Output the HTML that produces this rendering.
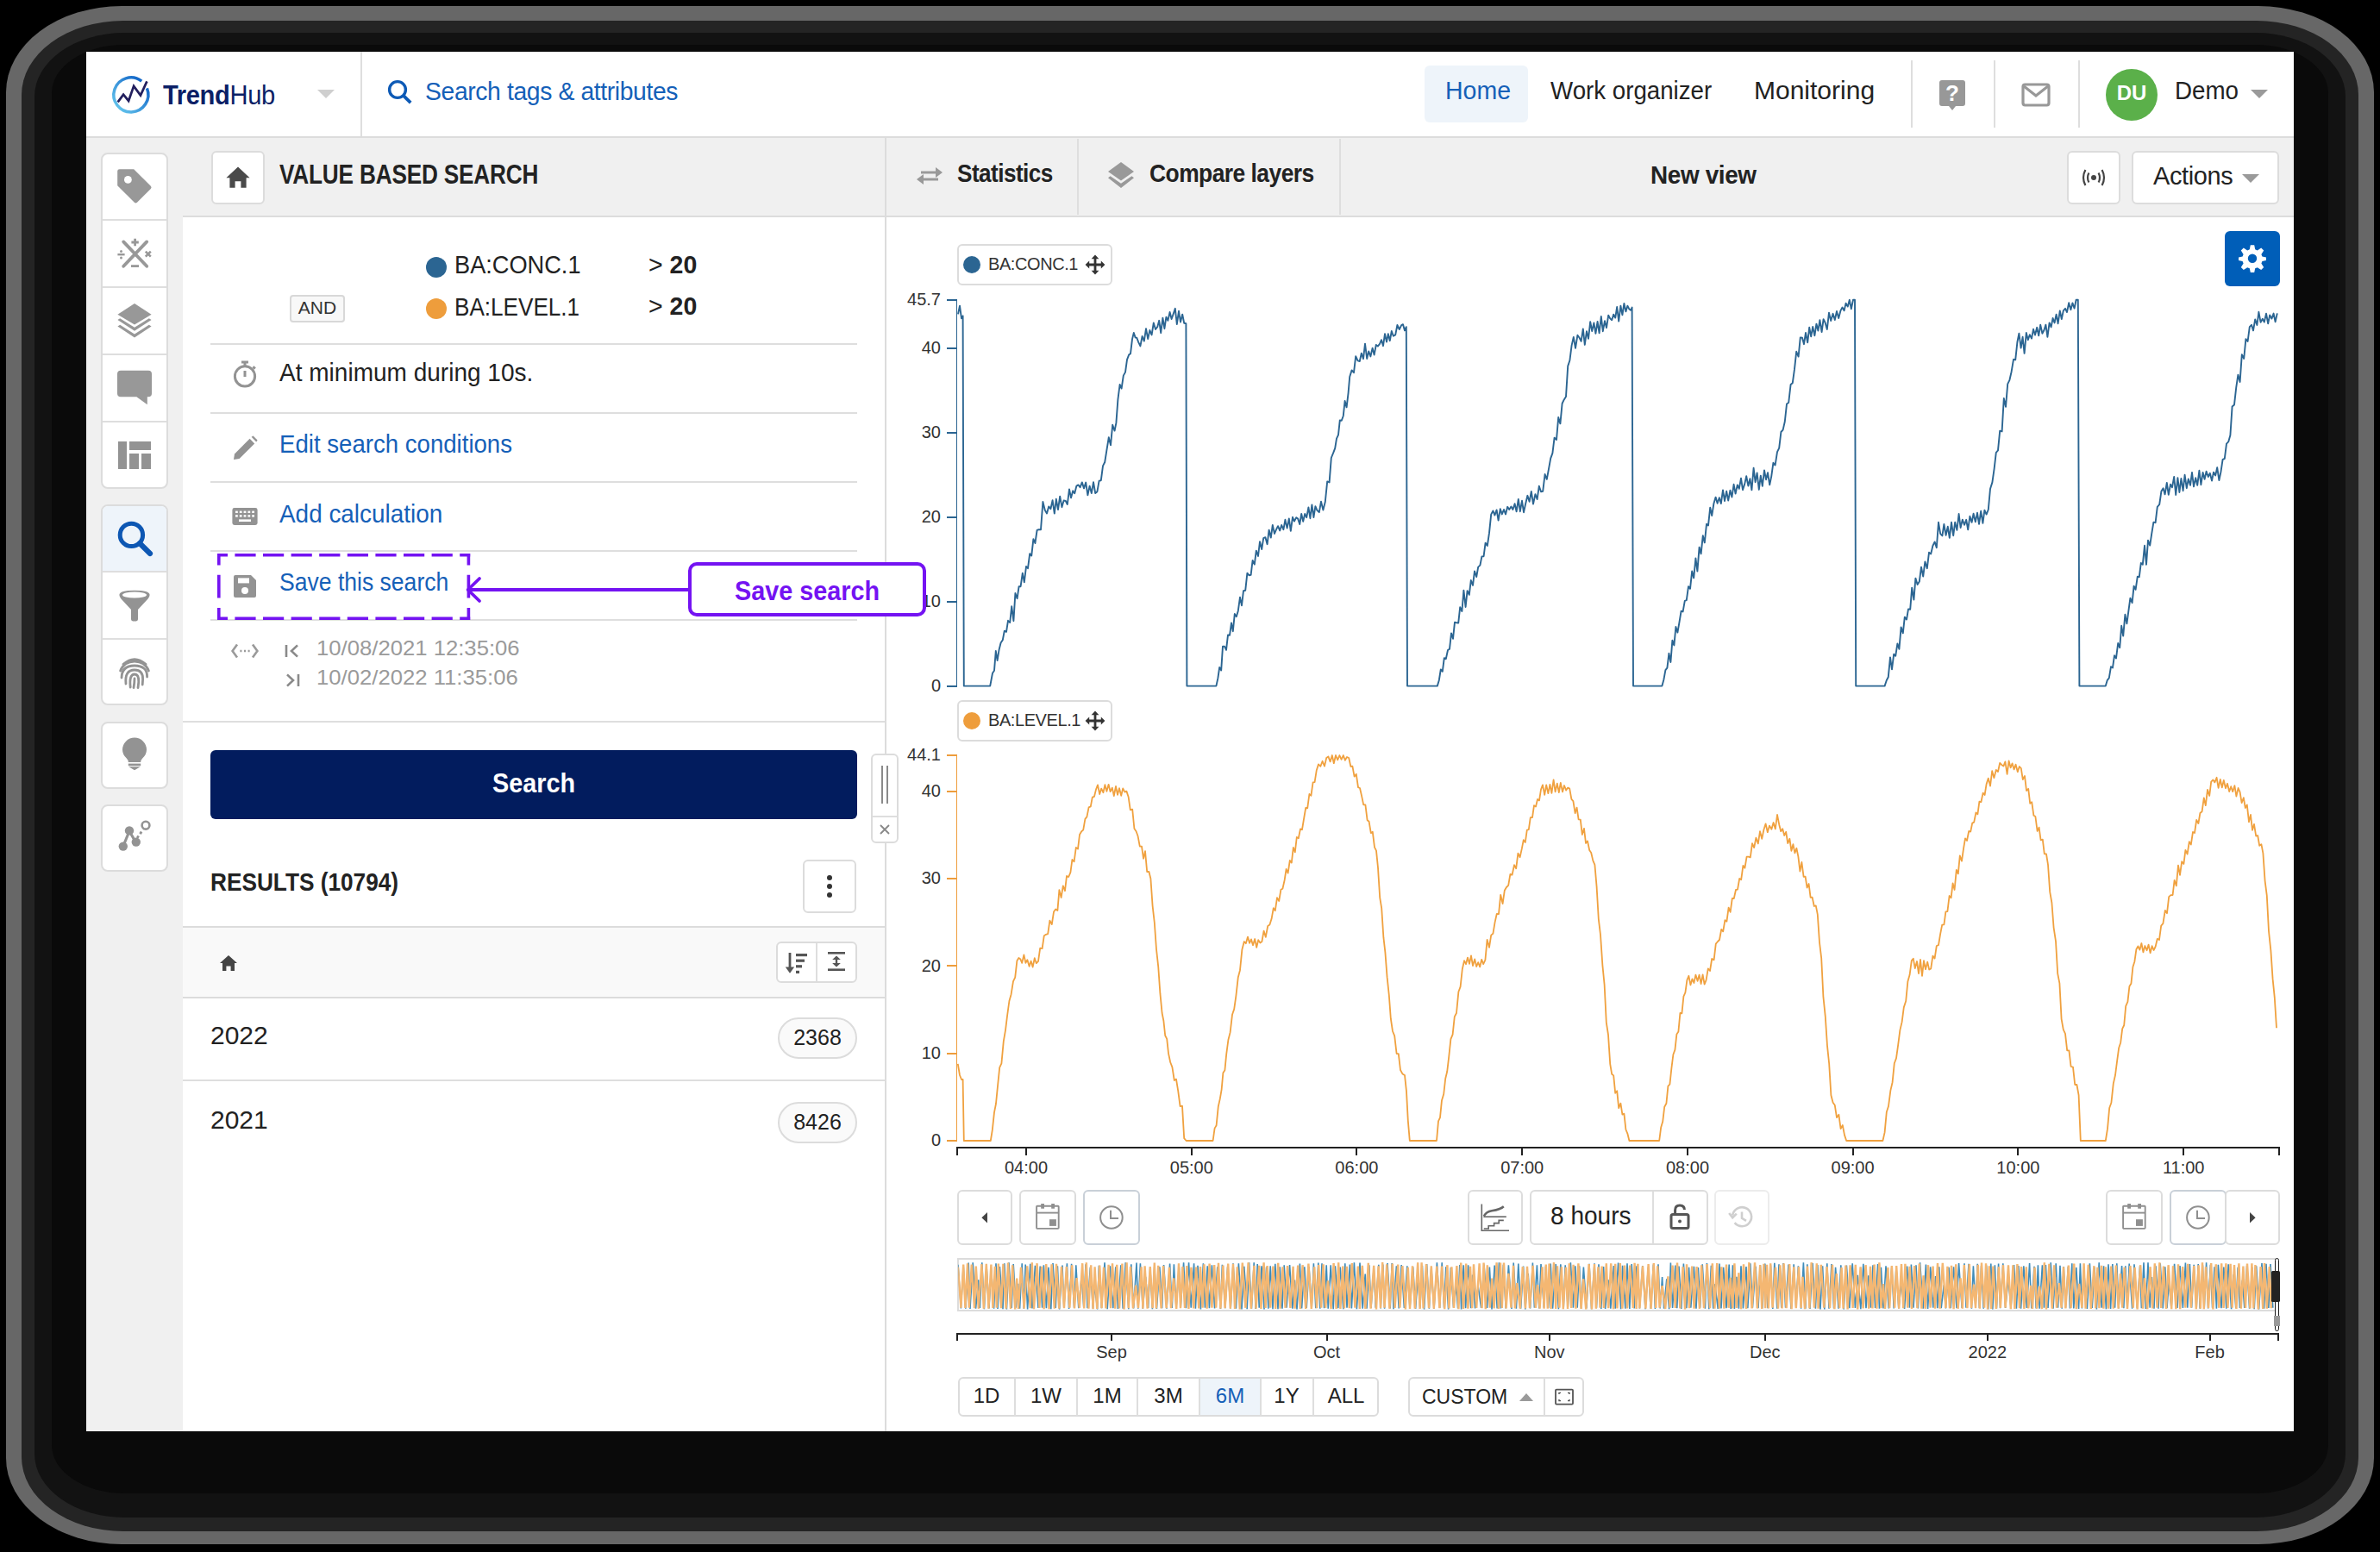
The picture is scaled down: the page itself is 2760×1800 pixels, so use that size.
<!DOCTYPE html>
<html><head><meta charset="utf-8">
<style>
*{box-sizing:border-box;margin:0;padding:0}
html,body{width:2760px;height:1800px;overflow:hidden;background:#000}
body{font-family:"Liberation Sans",sans-serif;color:#222;position:relative}
.sh{position:absolute}
#win{position:absolute;left:50px;top:30px;width:1280px;height:800px;zoom:2;background:#f0f0f0;overflow:hidden}
.a{position:absolute}
.t{position:absolute;white-space:nowrap;line-height:1}
svg{position:absolute;overflow:visible}
.btn{position:absolute;background:#fff;border:1px solid #dcdcdc;border-radius:3px}
.sep{position:absolute;background:#dedede}
</style></head><body>
<!-- shadow -->
<div class="sh" style="left:7px;top:7px;width:2746px;height:1784px;border-radius:134px/100px;background:#676767"></div>
<div class="sh" style="left:25px;top:24px;width:2710px;height:1752px;border-radius:118px/86px;background:#242424"></div>
<div class="sh" style="left:40px;top:38px;width:2680px;height:1722px;border-radius:104px/74px;background:#121212"></div>
<div class="sh" style="left:60px;top:52px;width:2640px;height:1680px;border-radius:84px/56px;background:#0a0a0a"></div>
<div id="win">
<!-- HEADER -->
<div class="a" style="left:0;top:0;width:1280px;height:49px;background:#fff;border-bottom:1px solid #dcdcdc;height:50px"></div>
<div class="sep" style="left:159px;top:0;width:1px;height:49px"></div>

<!-- logo -->
<svg style="left:14px;top:13px" width="24" height="24" viewBox="0 0 24 24">
 <defs><linearGradient id="lg" x1="0.1" y1="0.9" x2="0.9" y2="0.1"><stop offset="0" stop-color="#62c3ec"/><stop offset="1" stop-color="#0f62c6"/></linearGradient></defs>
 <path d="M21.21 8.22 A10 10 0 1 1 18.10 4.09" fill="none" stroke="url(#lg)" stroke-width="1.75"/>
 <path d="M4.32 16.18 L7.55 11.79 L10.56 15.48 L13.56 6.94 L17.49 12.25 L21.19 4.16" fill="none" stroke="#221f5e" stroke-width="1.35" stroke-linejoin="miter" stroke-miterlimit="3"/>
</svg>
<div class="t" style="left:44.6px;top:16.8px;font-size:16px;color:#0b1f66;letter-spacing:-0.2px;transform:scaleX(0.91);transform-origin:0 0"><b>Trend</b>Hub</div>
<svg style="left:134px;top:22px" width="10" height="5" viewBox="0 0 10 5"><path d="M0 0H10L5 5Z" fill="#cfcfcf"/></svg>
<!-- search -->
<svg style="left:174.3px;top:16.2px" width="15" height="15" viewBox="0 0 15 15"><circle cx="6" cy="6" r="4.7" fill="none" stroke="#0d5ab6" stroke-width="1.7"/><path d="M9.4 9.4 L13.6 13.6" stroke="#0d5ab6" stroke-width="1.9" stroke-linecap="butt"/></svg>
<div class="t" style="left:196.5px;top:15.4px;font-size:14.8px;color:#1560b8;letter-spacing:-0.2px;transform:scaleX(0.957);transform-origin:0 0">Search tags &amp; attributes</div>
<!-- nav -->
<div class="a" style="left:776px;top:8px;width:60px;height:33px;background:#eef4fa;border-radius:3px"></div>
<div class="t" style="left:788px;top:15px;font-size:15px;color:#1560b8;transform:scaleX(0.95);transform-origin:0 0">Home</div>
<div class="t" style="left:849px;top:15px;font-size:15px;color:#222;transform:scaleX(0.923);transform-origin:0 0">Work organizer</div>
<div class="t" style="left:967px;top:15px;font-size:15px;color:#222">Monitoring</div>
<div class="sep" style="left:1058px;top:5px;width:1px;height:39px"></div>
<div class="sep" style="left:1106px;top:5px;width:1px;height:39px"></div>
<div class="sep" style="left:1155px;top:5px;width:1px;height:39px"></div>
<svg style="left:1074px;top:16px" width="16" height="19" viewBox="0 0 16 19"><path d="M2 0.5H14A1.5 1.5 0 0 1 15.5 2V14A1.5 1.5 0 0 1 14 15.5H10L8 18L6 15.5H2A1.5 1.5 0 0 1 0.5 14V2A1.5 1.5 0 0 1 2 0.5Z" fill="#989898"/><text x="8" y="12.6" font-family="Liberation Sans" font-weight="bold" font-size="13" fill="#fff" text-anchor="middle">?</text></svg>
<svg style="left:1122px;top:18px" width="17" height="14" viewBox="0 0 17 14"><rect x="1" y="1" width="15" height="12" rx="1.2" fill="none" stroke="#989898" stroke-width="1.6"/><path d="M1.5 2 L8.5 7.5 L15.5 2" fill="none" stroke="#989898" stroke-width="1.6"/></svg>
<div class="a" style="left:1171px;top:10px;width:30px;height:30px;border-radius:50%;background:#5bb04a"></div>
<div class="t" style="left:1171px;top:18px;width:30px;text-align:center;font-size:12px;font-weight:bold;color:#fff">DU</div>
<div class="t" style="left:1211px;top:15px;font-size:15px;color:#222;transform:scaleX(0.925);transform-origin:0 0">Demo</div>
<svg style="left:1255px;top:22px" width="10" height="5" viewBox="0 0 10 5"><path d="M0 0H10L5 5Z" fill="#9a9a9a"/></svg>


<!-- SIDEBAR -->
<div class="btn" style="left:8.5px;top:58.5px;width:39px;height:195px;border-radius:4px"></div>
<div class="sep" style="left:9.5px;top:97px;width:37px;height:1px"></div>
<div class="sep" style="left:9.5px;top:136px;width:37px;height:1px"></div>
<div class="sep" style="left:9.5px;top:175px;width:37px;height:1px"></div>
<div class="sep" style="left:9.5px;top:214px;width:37px;height:1px"></div>
<div class="btn" style="left:8.5px;top:262.5px;width:39px;height:116.5px;border-radius:4px"></div>
<div class="a" style="left:9.5px;top:263.5px;width:37px;height:38px;background:#eef4fa;border-radius:3px 3px 0 0"></div>
<div class="sep" style="left:9.5px;top:301px;width:37px;height:1px"></div>
<div class="sep" style="left:9.5px;top:340px;width:37px;height:1px"></div>
<div class="btn" style="left:8.5px;top:388.5px;width:39px;height:39px;border-radius:4px"></div>
<div class="btn" style="left:8.5px;top:436.5px;width:39px;height:39px;border-radius:4px"></div>
<!-- tag -->
<svg style="left:18px;top:68px" width="20" height="20" viewBox="0 0 20 20"><path d="M1.3 0.1 H9.6 L19.4 9.9 Q20.2 10.7 19.4 11.5 L11.5 19.4 Q10.7 20.2 9.9 19.4 L0.1 9.6 V1.3 Q0.1 0.1 1.3 0.1Z" fill="#989898"/><circle cx="6.2" cy="6.2" r="2.2" fill="#fff"/></svg>
<!-- calc -->
<svg style="left:18px;top:106px" width="21" height="21" viewBox="0 0 21 21" stroke="#989898" fill="none" stroke-linecap="round"><path d="M3.6 4.2 L17.1 18.4 M17.1 4.2 L3.6 18.4" stroke-width="1.9"/><path d="M10.3 2.4V6.6 M8.2 4.5H12.4" stroke-width="1.4" stroke-linecap="butt"/><path d="M8 18.3H12.5" stroke-width="1.4" stroke-linecap="butt"/><path d="M0.2 11.6H4.3" stroke-width="1.2" stroke-linecap="butt"/><circle cx="2.25" cy="9.7" r="0.75" fill="#989898" stroke="none"/><circle cx="2.25" cy="13.5" r="0.75" fill="#989898" stroke="none"/><path d="M16.4 9.8 L19.4 12.8 M19.4 9.8 L16.4 12.8" stroke-width="1.3" stroke-linecap="butt"/></svg>
<!-- layers -->
<svg style="left:18px;top:145px" width="20" height="22" viewBox="0 0 20 22" fill="#989898"><path d="M10 1 L19.8 7.4 L10 13.3 L0.2 7.4Z"/><path d="M1.6 9.6 L10 14.9 L18.4 9.6 L19.8 10.5 L10 16.9 L0.2 10.5Z"/><path d="M1.6 13.4 L10 18.7 L18.4 13.4 L19.8 14.3 L10 20.8 L0.2 14.3Z"/></svg>
<!-- chat -->
<svg style="left:18px;top:184px" width="20" height="21" viewBox="0 0 20 21" fill="#989898"><path d="M2 0.9H18Q20 0.9 20 2.9V14.1Q20 16.1 18 16.1H17.4V20.6L11.2 16.1H2Q0 16.1 0 14.1V2.9Q0 0.9 2 0.9Z"/></svg>
<!-- dashboard -->
<svg style="left:18px;top:224px" width="20" height="20" viewBox="0 0 20 20" fill="#939393"><rect x="0.5" y="2" width="5" height="16"/><rect x="7" y="2" width="12.5" height="5"/><rect x="7" y="9" width="5.5" height="9"/><rect x="14" y="9" width="5.5" height="9"/></svg>
<!-- search active -->
<svg style="left:18px;top:272px" width="21" height="21" viewBox="0 0 21 21"><circle cx="8.2" cy="8.2" r="6.6" fill="none" stroke="#0d57b3" stroke-width="2.5"/><path d="M13.1 13.1 L19 19" stroke="#0d57b3" stroke-width="3.1" stroke-linecap="round"/></svg>
<!-- funnel -->
<svg style="left:18px;top:311px" width="20" height="20" viewBox="0 0 20 20" fill="#939393"><path d="M1.2 4 Q1.2 1.4 10 1.4 Q18.8 1.4 18.8 4 Q18.8 5 17.8 6.2 L12 12.5 V18 Q12 19.3 10 19.3 Q8 19.3 8 18 V12.5 L2.2 6.2 Q1.2 5 1.2 4Z"/><ellipse cx="10" cy="4" rx="7" ry="1.8" fill="#fff"/></svg>
<!-- fingerprint -->
<svg style="left:18px;top:350px" width="20" height="20" viewBox="0 0 20 20" fill="none" stroke="#939393" stroke-width="1.4" stroke-linecap="round"><path d="M3.5 5.2 Q10 -0.5 16.5 5.2"/><path d="M1.8 9 Q4 3.5 10 3.5 Q16 3.5 18.2 9"/><path d="M2.5 13 Q2.6 6 10 6 Q17.4 6 17.3 12.5"/><path d="M5 16.5 Q4.2 8.5 10 8.5 Q15 8.5 14.8 14 L14.6 17"/><path d="M7.6 18.5 Q6.8 11 10 11 Q12.6 11 12.4 15.5 L12 18.8"/><path d="M10 13.5 Q10 16 9.5 18.8"/></svg>
<!-- bulb -->
<svg style="left:18px;top:397px" width="20" height="20" viewBox="0 0 20 20" fill="#939393"><path d="M10 0.8 A7 7 0 0 1 17 7.8 Q17 10.6 14.6 12.8 Q13.6 13.8 13.6 15 H6.4 Q6.4 13.8 5.4 12.8 Q3 10.6 3 7.8 A7 7 0 0 1 10 0.8Z"/><rect x="6.4" y="15.8" width="7.2" height="1.3"/><path d="M6.6 17.6H13.4L10 19.6Z"/></svg>
<!-- scatter -->
<svg style="left:18px;top:445px" width="20" height="20" viewBox="0 0 20 20" fill="#939393"><path d="M3.5 15.5 L7 7 L10.5 13" stroke="#939393" stroke-width="1.6" fill="none"/><path d="M11.5 11 L15 6" stroke="#939393" stroke-width="1.4" stroke-dasharray="1.5 1.5" fill="none"/><circle cx="3.4" cy="15.8" r="2.6"/><circle cx="7" cy="6.7" r="2.6"/><circle cx="10.9" cy="13.3" r="2.6"/><circle cx="16.5" cy="3.6" r="2.2" fill="#fff" stroke="#939393" stroke-width="1.3"/></svg>

<!-- LEFT PANEL -->
<div class="a" style="left:56px;top:95px;width:408px;height:705px;background:#fff;border-top:1px solid #dcdcdc"></div>
<div class="btn" style="left:72.5px;top:57.5px;width:31px;height:31px;border-radius:3px"></div>
<svg style="left:80.5px;top:65.5px" width="15" height="15" viewBox="0 0 15 15"><path d="M7.5 1.2 L14.3 7.6 H12.3 V13.4 H9.2 V9.6 H5.8 V13.4 H2.7 V7.6 H0.7Z" fill="#4a4a4a"/></svg>
<div class="t" style="left:112px;top:63px;font-size:16px;font-weight:bold;color:#222;letter-spacing:-0.1px;transform:scaleX(0.817);transform-origin:0 0">VALUE BASED SEARCH</div>

<!-- conditions -->
<div class="a" style="left:197px;top:119px;width:12px;height:12px;border-radius:50%;background:#2b6592"></div>
<div class="t" style="left:213.5px;top:116px;font-size:15px;color:#222;transform:scaleX(0.906);transform-origin:0 0">BA:CONC.1</div>
<div class="t" style="left:326px;top:116px;font-size:15px;color:#222;font-weight:bold;transform:scaleX(0.95);transform-origin:0 0"><span style="font-weight:normal">&gt;</span> 20</div>
<div class="a" style="left:118px;top:141px;width:32px;height:16px;border:1px solid #d8d8d8;border-radius:2px;background:#f8f8f8"></div>
<div class="t" style="left:118px;top:143px;width:32px;text-align:center;font-size:10.5px;color:#333">AND</div>
<div class="a" style="left:197px;top:143px;width:12px;height:12px;border-radius:50%;background:#ee9d3c"></div>
<div class="t" style="left:213.5px;top:140.5px;font-size:15px;color:#222;transform:scaleX(0.87);transform-origin:0 0">BA:LEVEL.1</div>
<div class="t" style="left:326px;top:140px;font-size:15px;color:#222;font-weight:bold;transform:scaleX(0.95);transform-origin:0 0"><span style="font-weight:normal">&gt;</span> 20</div>

<div class="sep" style="left:72px;top:169px;width:375px;height:1px"></div>
<div class="sep" style="left:72px;top:209px;width:375px;height:1px"></div>
<div class="sep" style="left:72px;top:249px;width:375px;height:1px"></div>
<div class="sep" style="left:72px;top:289px;width:375px;height:1px"></div>
<div class="sep" style="left:72px;top:329px;width:375px;height:1px"></div>

<!-- stopwatch -->
<svg style="left:84.5px;top:179px" width="15" height="16" viewBox="0 0 15 16" fill="none" stroke="#939393" stroke-width="1.5"><circle cx="7.5" cy="9.2" r="5.8"/><path d="M5.5 1H9.5 M7.5 1V3.4 M7.5 6V9.5"/><path d="M12.2 3.6L13.4 4.8"/></svg>
<div class="t" style="left:112px;top:178.5px;font-size:15px;color:#222;transform:scaleX(0.934);transform-origin:0 0">At minimum during 10s.</div>
<!-- pencil -->
<svg style="left:85px;top:222.8px" width="14" height="14" viewBox="0 0 14 14" fill="#939393"><path d="M0.5 13.5 L1 10.2 L9.8 1.4 L12.6 4.2 L3.8 13Z"/><path d="M10.8 0.4 L11.8 -0.2 L14.3 2.3 L13.6 3.3Z"/></svg>
<div class="t" style="left:112px;top:220px;font-size:15px;color:#1560b8;transform:scaleX(0.92);transform-origin:0 0">Edit search conditions</div>
<!-- keyboard -->
<svg style="left:84.5px;top:264px" width="15" height="11" viewBox="0 0 15 11"><rect x="0.2" y="0.5" width="14.6" height="10" rx="1.2" fill="#939393"/><g fill="#fff"><rect x="2" y="2.3" width="1.4" height="1.2"/><rect x="4.4" y="2.3" width="1.4" height="1.2"/><rect x="6.8" y="2.3" width="1.4" height="1.2"/><rect x="9.2" y="2.3" width="1.4" height="1.2"/><rect x="11.6" y="2.3" width="1.4" height="1.2"/><rect x="2" y="4.6" width="1.4" height="1.2"/><rect x="4.4" y="4.6" width="1.4" height="1.2"/><rect x="6.8" y="4.6" width="1.4" height="1.2"/><rect x="9.2" y="4.6" width="1.4" height="1.2"/><rect x="11.6" y="4.6" width="1.4" height="1.2"/><rect x="4" y="7.2" width="7" height="1.3"/></g></svg>
<div class="t" style="left:112px;top:260.5px;font-size:15px;color:#1560b8;transform:scaleX(0.93);transform-origin:0 0">Add calculation</div>
<!-- floppy -->
<svg style="left:85px;top:303px" width="14" height="14" viewBox="0 0 14 14" fill="#939393"><path d="M1.5 0.5H10.5L13.5 3.5V12.5Q13.5 13.5 12.5 13.5H1.5Q0.5 13.5 0.5 12.5V1.5Q0.5 0.5 1.5 0.5Z"/><rect x="3" y="2.2" width="6.5" height="3" fill="#fff"/><circle cx="7" cy="9.5" r="2" fill="#fff"/></svg>
<div class="t" style="left:112px;top:300.2px;font-size:15px;color:#1560b8;transform:scaleX(0.885);transform-origin:0 0">Save this search</div>

<!-- dates -->
<svg style="left:84px;top:343px" width="16" height="9" viewBox="0 0 16 9" fill="none" stroke="#9a9a9a" stroke-width="1.3"><path d="M3.5 0.8 L0.8 4.5 L3.5 8.2 M12.5 0.8 L15.2 4.5 L12.5 8.2"/><path d="M5.2 4.5H6.2 M7.5 4.5H8.5 M9.8 4.5H10.8"/></svg>
<svg style="left:115px;top:343px" width="9" height="9" viewBox="0 0 9 9" fill="none" stroke="#8a8a8a" stroke-width="1.3"><path d="M1 1V8 M7.5 1.2 L4 4.5 L7.5 7.8"/></svg>
<svg style="left:115px;top:360px" width="9" height="9" viewBox="0 0 9 9" fill="none" stroke="#8a8a8a" stroke-width="1.3"><path d="M8 1V8 M1.5 1.2 L5 4.5 L1.5 7.8"/></svg>
<div class="t" style="left:133.5px;top:340px;font-size:12px;color:#9a9a9a;transform:scaleX(1.07);transform-origin:0 0">10/08/2021 12:35:06</div>
<div class="t" style="left:133.5px;top:357px;font-size:12px;color:#9a9a9a;transform:scaleX(1.07);transform-origin:0 0">10/02/2022 11:35:06</div>
<div class="sep" style="left:56px;top:388px;width:408px;height:1px"></div>

<!-- search button -->
<div class="a" style="left:72px;top:405px;width:375px;height:40px;background:#021c5e;border-radius:3px"></div>
<div class="t" style="left:72px;top:416px;width:375px;text-align:center;font-size:16px;font-weight:bold;color:#fff;transform:scaleX(0.9);transform-origin:50% 0">Search</div>

<!-- results -->
<div class="t" style="left:72px;top:474.1px;font-size:15px;font-weight:bold;color:#222;transform:scaleX(0.874);transform-origin:0 0">RESULTS (10794)</div>
<div class="btn" style="left:415.5px;top:468.5px;width:31px;height:31px;border-radius:3px"></div>
<svg style="left:429px;top:477px" width="4" height="14" viewBox="0 0 4 14" fill="#333"><circle cx="2" cy="2" r="1.5"/><circle cx="2" cy="7" r="1.5"/><circle cx="2" cy="12" r="1.5"/></svg>
<div class="a" style="left:56px;top:507px;width:408px;height:42px;background:#f9f9f9;border-top:1px solid #dcdcdc;border-bottom:1px solid #dcdcdc"></div>
<svg style="left:77px;top:523.5px" width="11" height="10" viewBox="0 0 11 10"><path d="M5.5 0.5 L10.5 5 H9 V9.5 H6.8 V6.8 H4.2 V9.5 H2 V5 H0.5Z" fill="#444"/></svg>
<div class="btn" style="left:400px;top:516px;width:47px;height:24px;border-radius:3px"></div>
<div class="sep" style="left:423px;top:517px;width:1px;height:22px"></div>
<svg style="left:405px;top:522px" width="14" height="13" viewBox="0 0 14 13" fill="#555"><path d="M3 0.5V10" stroke="#555" stroke-width="1.4"/><path d="M0.4 8.8 L3 12.4 L5.6 8.8Z"/><rect x="6.5" y="1" width="6.5" height="1.6"/><rect x="6.5" y="4.3" width="5" height="1.6"/><rect x="6.5" y="7.6" width="3.5" height="1.6"/><rect x="6.5" y="10.9" width="2" height="1.6"/></svg>
<svg style="left:429px;top:521.5px" width="12" height="12" viewBox="0 0 12 12" fill="#555"><rect x="1" y="0.5" width="10" height="1.3"/><rect x="1" y="10.2" width="10" height="1.3"/><path d="M6 2.8 L8.4 5 H3.6Z"/><path d="M6 9.2 L8.4 7 H3.6Z"/><rect x="5.4" y="4.6" width="1.2" height="2.8"/></svg>
<div class="t" style="left:72px;top:563px;font-size:15px;color:#222">2022</div>
<div class="a" style="left:401px;top:560px;width:46px;height:24px;border:1px solid #dcdcdc;border-radius:12px;background:#fafafa"></div>
<div class="t" style="left:401px;top:565.5px;width:46px;text-align:center;font-size:12.5px;color:#222">2368</div>
<div class="sep" style="left:56px;top:596px;width:408px;height:1px"></div>
<div class="t" style="left:72px;top:612.2px;font-size:15px;color:#222">2021</div>
<div class="a" style="left:401px;top:609px;width:46px;height:24px;border:1px solid #dcdcdc;border-radius:12px;background:#fafafa"></div>
<div class="t" style="left:401px;top:614.7px;width:46px;text-align:center;font-size:12.5px;color:#222">8426</div>

<!-- splitter vertical line -->
<div class="sep" style="left:463px;top:50px;width:1px;height:750px;background:#dcdcdc"></div>


<!-- CHART TOOLBAR -->
<svg style="left:481px;top:65.8px" width="16" height="12" viewBox="0 0 16 12" fill="#999"><path d="M3 3.2 H11.5 V1 L15.5 4 L11.5 7 V4.8 H3Z" /><path d="M13 7.2 H4.5 V5 L0.5 8 L4.5 11 V8.8 H13Z"/></svg>
<div class="t" style="left:505px;top:62.8px;font-size:15px;font-weight:bold;color:#222;letter-spacing:-0.3px;transform:scaleX(0.87);transform-origin:0 0">Statistics</div>
<div class="sep" style="left:574.5px;top:50.5px;width:1px;height:44px"></div>
<svg style="left:592px;top:63.5px" width="16" height="16" viewBox="0 0 16 16" fill="#999"><path d="M8 0.5 L15.5 6 L8 11.2 L0.5 6Z"/><path d="M1.8 8.6 L8 12.9 L14.2 8.6 L15.5 9.6 L8 15.5 L0.5 9.6Z"/></svg>
<div class="t" style="left:616.5px;top:62.8px;font-size:15px;font-weight:bold;color:#222;letter-spacing:-0.3px;transform:scaleX(0.88);transform-origin:0 0">Compare layers</div>
<div class="sep" style="left:726.5px;top:50.5px;width:1px;height:44px"></div>
<div class="t" style="left:907px;top:64px;font-size:15px;font-weight:bold;color:#222;letter-spacing:-0.2px;transform:scaleX(0.93);transform-origin:0 0">New view</div>
<div class="btn" style="left:1148.5px;top:57.5px;width:31px;height:31px;border-radius:3px"></div>
<svg style="left:1156px;top:67px" width="16" height="12" viewBox="0 0 16 12" fill="none" stroke="#444" stroke-width="1.1"><path d="M3.2 1.5 Q0.8 6 3.2 10.5 M12.8 1.5 Q15.2 6 12.8 10.5 M5.2 3.2 Q3.8 6 5.2 8.8 M10.8 3.2 Q12.2 6 10.8 8.8"/><circle cx="8" cy="6" r="1.5" fill="#444" stroke="none"/></svg>
<div class="btn" style="left:1186px;top:57.5px;width:85.5px;height:31px;border-radius:3px"></div>
<div class="t" style="left:1198.5px;top:64.5px;font-size:15px;color:#222;letter-spacing:-0.2px;transform:scaleX(0.965);transform-origin:0 0">Actions</div>
<svg style="left:1250px;top:71px" width="10" height="5" viewBox="0 0 10 5"><path d="M0 0H10L5 5Z" fill="#9a9a9a"/></svg>

<!-- CHART AREA -->
<div class="a" style="left:464px;top:95px;width:816px;height:705px;background:#fff;border-top:1px solid #dcdcdc"></div>
<div class="a" style="left:1240px;top:104px;width:32px;height:32px;background:#005eb8;border-radius:3px"></div>
<svg style="left:1248px;top:112px" width="16" height="16" viewBox="0 0 16 16"><path fill="#fff" fill-rule="evenodd" d="M6.9 0.1H9.1L9.6 2.6L10.9 3.2L13.1 1.8L14.6 3.3L13.2 5.5L13.7 6.8L16 7.3V9.0L13.7 9.5L13.2 10.8L14.6 13L13.1 14.5L10.9 13.1L9.6 13.6L9.1 16H6.9L6.4 13.6L5.1 13.1L2.9 14.5L1.4 13L2.8 10.8L2.3 9.5L0 9.0V7.3L2.3 6.8L2.8 5.5L1.4 3.3L2.9 1.8L5.1 3.2L6.4 2.6Z M8 5.3A2.6 2.6 0 1 0 8 10.5A2.6 2.6 0 1 0 8 5.3Z"/></svg>

<!-- legend 1 -->
<div class="btn" style="left:505px;top:111.5px;width:90px;height:24px;border-radius:3px"></div>
<div class="a" style="left:508.5px;top:118.5px;width:10px;height:10px;border-radius:50%;background:#2b6592"></div>
<div class="t" style="left:523px;top:118.5px;font-size:9.8px;color:#333;letter-spacing:-0.2px;transform:scaleX(1.02);transform-origin:0 0">BA:CONC.1</div>
<svg style="left:579px;top:117.5px" width="12" height="12" viewBox="0 0 12 12" fill="#333"><path d="M6 0.3 L8.2 2.6 H6.7 V5.3 H9.4 V3.8 L11.7 6 L9.4 8.2 V6.7 H6.7 V9.4 H8.2 L6 11.7 L3.8 9.4 H5.3 V6.7 H2.6 V8.2 L0.3 6 L2.6 3.8 V5.3 H5.3 V2.6 H3.8Z"/></svg>
<!-- legend 2 -->
<div class="btn" style="left:505px;top:376px;width:90px;height:24px;border-radius:3px"></div>
<div class="a" style="left:508.5px;top:383px;width:10px;height:10px;border-radius:50%;background:#ee9d3c"></div>
<div class="t" style="left:523px;top:383px;font-size:9.8px;color:#333;letter-spacing:-0.2px;transform:scaleX(1.02);transform-origin:0 0">BA:LEVEL.1</div>
<svg style="left:579px;top:382px" width="12" height="12" viewBox="0 0 12 12" fill="#333"><path d="M6 0.3 L8.2 2.6 H6.7 V5.3 H9.4 V3.8 L11.7 6 L9.4 8.2 V6.7 H6.7 V9.4 H8.2 L6 11.7 L3.8 9.4 H5.3 V6.7 H2.6 V8.2 L0.3 6 L2.6 3.8 V5.3 H5.3 V2.6 H3.8Z"/></svg>

<!-- axes -->
<div class="a" style="left:504.3px;top:143.5px;width:0.9px;height:224.5px;background:#2b6592"></div>
<div class="a" style="left:504.3px;top:407.5px;width:0.9px;height:224px;background:#ee9d3c"></div>
<div class="t" style="left:455.5px;top:138.6px;width:40px;text-align:right;font-size:10px;color:#333">45.7</div>
<div class="a" style="left:499px;top:143.4px;width:6px;height:1px;background:#2b6592"></div>
<div class="t" style="left:455.5px;top:166.5px;width:40px;text-align:right;font-size:10px;color:#333">40</div>
<div class="a" style="left:499px;top:171.3px;width:6px;height:1px;background:#2b6592"></div>
<div class="t" style="left:455.5px;top:215.5px;width:40px;text-align:right;font-size:10px;color:#333">30</div>
<div class="a" style="left:499px;top:220.3px;width:6px;height:1px;background:#2b6592"></div>
<div class="t" style="left:455.5px;top:264.5px;width:40px;text-align:right;font-size:10px;color:#333">20</div>
<div class="a" style="left:499px;top:269.3px;width:6px;height:1px;background:#2b6592"></div>
<div class="t" style="left:455.5px;top:313.5px;width:40px;text-align:right;font-size:10px;color:#333">10</div>
<div class="a" style="left:499px;top:318.3px;width:6px;height:1px;background:#2b6592"></div>
<div class="t" style="left:455.5px;top:362.5px;width:40px;text-align:right;font-size:10px;color:#333">0</div>
<div class="a" style="left:499px;top:367.3px;width:6px;height:1px;background:#2b6592"></div>
<div class="t" style="left:455.5px;top:402.7px;width:40px;text-align:right;font-size:10px;color:#333">44.1</div>
<div class="a" style="left:499px;top:407.5px;width:6px;height:1px;background:#ee9d3c"></div>
<div class="t" style="left:455.5px;top:423.5px;width:40px;text-align:right;font-size:10px;color:#333">40</div>
<div class="a" style="left:499px;top:428.3px;width:6px;height:1px;background:#ee9d3c"></div>
<div class="t" style="left:455.5px;top:474.2px;width:40px;text-align:right;font-size:10px;color:#333">30</div>
<div class="a" style="left:499px;top:479.0px;width:6px;height:1px;background:#ee9d3c"></div>
<div class="t" style="left:455.5px;top:524.8px;width:40px;text-align:right;font-size:10px;color:#333">20</div>
<div class="a" style="left:499px;top:529.6px;width:6px;height:1px;background:#ee9d3c"></div>
<div class="t" style="left:455.5px;top:575.5px;width:40px;text-align:right;font-size:10px;color:#333">10</div>
<div class="a" style="left:499px;top:580.3px;width:6px;height:1px;background:#ee9d3c"></div>
<div class="t" style="left:455.5px;top:626.2px;width:40px;text-align:right;font-size:10px;color:#333">0</div>
<div class="a" style="left:499px;top:631.0px;width:6px;height:1px;background:#ee9d3c"></div>

<div class="a" style="left:504.5px;top:635px;width:767.5px;height:1.2px;background:#222"></div>
<div class="a" style="left:504.5px;top:635px;width:1px;height:5px;background:#222"></div>
<div class="a" style="left:1271px;top:635px;width:1px;height:5px;background:#222"></div>
<div class="a" style="left:544.5px;top:635px;width:1px;height:5px;background:#222"></div>
<div class="t" style="left:525.0px;top:642px;width:40px;text-align:center;font-size:10px;color:#333">04:00</div>
<div class="a" style="left:640.4px;top:635px;width:1px;height:5px;background:#222"></div>
<div class="t" style="left:620.9px;top:642px;width:40px;text-align:center;font-size:10px;color:#333">05:00</div>
<div class="a" style="left:736.2px;top:635px;width:1px;height:5px;background:#222"></div>
<div class="t" style="left:716.7px;top:642px;width:40px;text-align:center;font-size:10px;color:#333">06:00</div>
<div class="a" style="left:832.1px;top:635px;width:1px;height:5px;background:#222"></div>
<div class="t" style="left:812.6px;top:642px;width:40px;text-align:center;font-size:10px;color:#333">07:00</div>
<div class="a" style="left:928.0px;top:635px;width:1px;height:5px;background:#222"></div>
<div class="t" style="left:908.5px;top:642px;width:40px;text-align:center;font-size:10px;color:#333">08:00</div>
<div class="a" style="left:1023.8px;top:635px;width:1px;height:5px;background:#222"></div>
<div class="t" style="left:1004.3px;top:642px;width:40px;text-align:center;font-size:10px;color:#333">09:00</div>
<div class="a" style="left:1119.7px;top:635px;width:1px;height:5px;background:#222"></div>
<div class="t" style="left:1100.2px;top:642px;width:40px;text-align:center;font-size:10px;color:#333">10:00</div>
<div class="a" style="left:1215.6px;top:635px;width:1px;height:5px;background:#222"></div>
<div class="t" style="left:1196.1px;top:642px;width:40px;text-align:center;font-size:10px;color:#333">11:00</div>

<svg style="left:0;top:0" width="1280" height="800" viewBox="0 0 1280 800">
<path d="M505.5 152.2 L506.5 147.3 L507.5 154.7 L508.3 153.2 L508.9 367.8 L510.0 367.8 L511.1 367.8 L512.2 367.8 L513.2 367.8 L514.3 367.8 L515.4 367.8 L516.5 367.8 L517.6 367.8 L518.7 367.8 L519.8 367.8 L520.8 367.8 L521.9 367.8 L523.0 367.8 L524.1 367.8 L524.1 367.8 L525.5 360.4 L526.5 358.9 L527.4 347.5 L528.3 353.0 L529.3 346.7 L530.3 342.8 L531.4 341.1 L532.4 335.8 L533.5 336.4 L534.5 329.9 L535.6 331.0 L536.6 321.6 L537.7 330.1 L538.7 314.0 L539.8 317.1 L540.8 310.1 L541.8 310.1 L542.9 302.3 L543.9 307.7 L545.0 298.5 L546.0 299.6 L547.1 291.1 L548.1 292.3 L549.2 282.6 L550.2 285.0 L551.3 277.5 L552.3 277.1 L553.5 277.1 L554.7 261.0 L555.9 265.9 L557.0 267.7 L558.1 263.7 L559.2 265.1 L560.3 260.1 L561.4 267.8 L562.4 259.4 L563.5 265.5 L564.6 257.8 L565.7 264.1 L566.8 260.2 L567.9 260.5 L568.9 262.5 L570.0 253.7 L571.0 258.7 L572.1 254.6 L573.1 256.1 L574.2 251.8 L575.2 251.2 L576.3 252.6 L577.4 249.7 L578.5 253.2 L579.6 249.8 L580.7 257.2 L581.8 251.8 L582.9 256.0 L584.0 249.6 L585.1 256.0 L586.2 255.1 L587.3 248.8 L588.4 248.6 L589.5 240.2 L590.6 238.0 L591.7 231.1 L592.9 223.6 L594.0 228.2 L595.1 216.4 L596.3 219.8 L597.2 215.2 L598.2 201.7 L599.3 193.0 L600.3 195.3 L601.4 187.8 L602.5 185.8 L603.5 178.6 L604.6 175.7 L605.5 175.1 L606.5 166.7 L607.4 163.0 L608.3 165.7 L609.2 166.0 L610.1 168.4 L611.2 170.7 L612.3 165.0 L613.4 167.8 L614.5 160.6 L615.6 166.5 L616.7 161.5 L617.8 164.2 L618.9 157.2 L620.0 161.0 L621.1 159.6 L622.1 155.9 L623.1 163.1 L624.2 154.3 L625.2 160.6 L626.2 153.8 L627.2 155.9 L628.3 151.0 L629.3 155.0 L630.3 152.2 L631.4 148.9 L632.4 158.0 L633.5 150.4 L634.5 156.8 L635.6 152.3 L636.6 157.4 L637.7 157.6 L638.2 367.8 L655.2 367.8 L655.2 367.8 L656.2 363.2 L657.1 357.0 L658.1 358.7 L659.0 344.8 L660.0 344.8 L661.0 346.9 L662.0 338.2 L663.0 338.4 L664.0 331.2 L664.9 336.1 L665.9 326.0 L666.9 327.6 L667.9 324.2 L669.0 316.3 L670.0 321.1 L671.0 312.6 L672.1 312.4 L673.2 302.3 L674.2 303.6 L675.3 303.4 L676.3 295.0 L677.4 297.3 L678.4 289.3 L679.5 292.5 L680.5 284.1 L681.6 288.5 L682.6 282.1 L683.7 281.6 L684.8 285.6 L685.8 277.3 L686.9 281.8 L687.9 274.5 L689.0 279.5 L690.0 277.1 L691.0 275.1 L692.1 277.7 L693.1 274.5 L694.2 277.1 L695.2 271.4 L696.3 276.3 L697.4 270.7 L698.4 277.9 L699.5 269.9 L700.5 272.3 L701.6 270.1 L702.6 270.8 L703.6 274.0 L704.6 268.0 L705.6 272.4 L706.6 268.0 L707.6 270.1 L708.7 264.2 L709.7 270.6 L710.7 262.7 L711.7 270.0 L712.7 263.6 L713.7 265.9 L714.9 267.1 L716.0 260.8 L717.2 265.8 L718.4 261.0 L719.6 249.2 L720.8 249.7 L721.9 235.5 L723.1 232.6 L724.1 229.9 L725.0 224.3 L726.0 222.2 L726.9 213.7 L727.9 213.9 L728.9 211.1 L729.8 202.5 L730.8 206.2 L731.8 197.8 L732.6 188.5 L733.8 184.7 L735.0 186.1 L736.1 176.6 L737.3 179.2 L738.4 179.5 L739.4 174.8 L740.5 178.1 L741.5 169.3 L742.6 178.0 L743.6 173.7 L744.7 176.7 L745.8 171.8 L746.8 175.8 L747.9 170.0 L748.9 170.8 L750.0 169.4 L751.0 167.1 L752.0 170.6 L753.0 163.6 L754.0 168.3 L754.9 163.6 L755.9 167.6 L756.9 162.0 L757.9 164.9 L759.1 164.2 L760.2 158.5 L761.4 161.0 L762.6 158.6 L763.5 158.1 L764.5 161.7 L765.4 159.6 L766.0 367.8 L783.4 367.8 L783.4 367.8 L784.4 364.5 L785.4 358.2 L786.4 359.4 L787.4 351.6 L788.4 352.1 L789.5 347.0 L790.5 346.3 L791.5 337.2 L792.5 340.4 L793.5 330.8 L794.5 331.1 L795.6 331.3 L796.6 322.1 L797.7 324.5 L798.7 312.3 L799.8 322.0 L800.8 312.6 L801.9 314.9 L802.9 306.5 L804.0 309.4 L805.0 301.2 L806.1 304.5 L807.1 298.8 L808.2 297.8 L809.2 292.7 L810.3 292.6 L811.3 284.8 L812.4 286.5 L813.5 279.1 L814.6 268.3 L815.7 266.2 L816.7 268.8 L817.8 265.7 L818.8 271.8 L819.9 265.1 L820.9 268.2 L822.0 265.5 L823.0 268.2 L824.1 263.9 L825.1 265.5 L826.2 263.8 L827.2 265.5 L828.3 262.1 L829.3 266.7 L830.4 259.5 L831.4 266.6 L832.5 260.4 L833.5 267.1 L834.6 262.0 L835.7 257.4 L836.8 260.9 L837.9 255.0 L839.0 262.3 L840.2 256.6 L841.3 259.5 L842.4 251.9 L843.5 255.1 L844.6 254.9 L845.8 245.0 L846.9 247.9 L848.0 241.9 L849.1 235.8 L850.2 232.8 L851.3 223.8 L852.5 225.0 L853.6 212.0 L854.7 215.7 L855.8 204.0 L856.9 201.7 L858.0 200.0 L859.1 182.3 L860.2 179.0 L861.3 170.3 L862.4 165.5 L863.5 171.9 L864.7 164.4 L865.8 165.9 L866.8 167.9 L867.9 160.7 L868.9 169.9 L870.0 162.1 L871.0 166.4 L872.1 156.6 L873.1 162.0 L874.2 157.2 L875.2 163.4 L876.3 156.5 L877.3 163.2 L878.4 153.5 L879.4 162.1 L880.5 156.1 L881.5 160.1 L882.6 152.8 L883.6 154.7 L884.6 155.6 L885.6 152.3 L886.6 154.3 L887.6 148.0 L888.6 156.3 L889.7 147.3 L890.7 152.7 L891.7 146.0 L892.7 150.7 L893.7 147.3 L894.7 149.3 L895.5 149.9 L896.3 148.3 L897.0 367.8 L913.7 367.8 L913.7 367.8 L914.7 364.1 L915.7 358.6 L916.7 357.3 L917.7 348.9 L918.7 354.0 L919.7 341.3 L920.7 344.2 L921.7 333.5 L922.7 336.8 L923.7 331.1 L924.8 324.3 L925.8 324.7 L926.9 318.4 L927.9 318.1 L929.0 310.1 L930.0 311.4 L931.1 301.2 L932.1 305.2 L933.2 293.7 L934.2 301.3 L935.3 287.3 L936.3 291.2 L937.4 280.6 L938.4 284.7 L939.5 273.9 L940.5 274.7 L941.6 264.4 L942.6 269.0 L943.7 262.0 L944.8 258.3 L945.8 261.9 L946.9 258.6 L947.9 262.0 L949.0 254.2 L950.0 260.5 L951.1 254.9 L952.1 260.3 L953.2 254.4 L954.2 258.3 L955.3 250.9 L956.3 256.3 L957.4 251.2 L958.4 253.4 L959.5 247.3 L960.5 254.1 L961.6 250.7 L962.6 246.1 L963.7 251.8 L964.7 247.6 L965.7 254.2 L966.8 241.4 L967.8 249.6 L968.8 244.2 L969.9 253.9 L970.9 245.8 L971.9 251.9 L973.0 242.7 L974.0 248.1 L975.0 244.1 L976.1 251.2 L977.1 246.3 L978.2 238.4 L979.3 239.8 L980.5 232.1 L981.6 229.8 L982.7 220.5 L983.8 219.3 L984.9 214.5 L986.0 204.3 L987.1 203.5 L988.3 193.0 L989.4 192.1 L990.5 184.1 L991.6 173.9 L992.8 176.8 L993.9 165.7 L995.0 165.9 L996.0 169.6 L997.0 163.0 L998.1 168.6 L999.1 159.9 L1000.1 165.2 L1001.1 159.5 L1002.2 164.6 L1003.2 157.8 L1004.2 161.8 L1005.2 155.6 L1006.3 162.5 L1007.3 155.1 L1008.3 157.1 L1009.4 161.0 L1010.5 151.3 L1011.6 156.0 L1012.8 151.9 L1013.9 155.5 L1015.0 150.5 L1016.1 154.5 L1017.2 150.2 L1018.2 148.3 L1019.3 150.1 L1020.3 145.8 L1021.4 147.8 L1022.4 143.9 L1023.4 149.2 L1024.5 143.9 L1025.5 143.9 L1026.1 367.8 L1042.8 367.8 L1042.8 367.8 L1043.9 364.5 L1044.9 362.6 L1046.0 351.2 L1047.0 358.2 L1048.1 349.3 L1049.1 350.4 L1050.2 343.2 L1051.2 346.4 L1052.3 333.7 L1053.4 337.2 L1054.4 327.8 L1055.5 329.3 L1056.5 323.2 L1057.6 323.4 L1058.6 310.8 L1059.7 317.8 L1060.7 305.3 L1061.8 309.0 L1062.9 307.3 L1064.0 298.8 L1065.1 304.3 L1066.2 295.7 L1067.4 299.6 L1068.5 290.4 L1069.6 291.2 L1070.7 286.5 L1071.8 284.2 L1072.9 287.6 L1074.0 272.9 L1075.1 279.6 L1076.2 280.7 L1077.2 274.0 L1078.3 280.4 L1079.4 275.4 L1080.4 281.9 L1081.5 272.9 L1082.6 280.6 L1083.6 272.8 L1084.7 277.4 L1085.8 268.0 L1086.8 276.0 L1087.9 271.3 L1089.0 274.4 L1090.1 271.4 L1091.1 277.2 L1092.2 269.4 L1093.3 272.9 L1094.3 267.9 L1095.4 272.6 L1096.5 267.4 L1097.5 273.9 L1098.6 266.3 L1099.7 273.4 L1100.7 265.8 L1101.8 268.3 L1102.9 265.5 L1104.0 253.5 L1105.2 249.7 L1106.3 241.9 L1107.4 232.4 L1108.5 231.2 L1109.6 219.8 L1110.8 220.2 L1111.9 201.0 L1113.0 205.9 L1114.1 192.7 L1115.2 190.4 L1116.3 185.6 L1117.5 178.4 L1118.6 178.7 L1119.7 168.4 L1120.7 163.3 L1121.8 171.8 L1122.8 165.4 L1123.8 174.9 L1124.9 163.0 L1125.9 167.1 L1126.9 164.1 L1128.0 166.3 L1129.0 160.9 L1130.0 164.3 L1131.1 159.9 L1132.1 164.7 L1133.1 158.4 L1134.2 163.4 L1135.2 161.5 L1136.2 158.3 L1137.2 165.4 L1138.3 157.2 L1139.3 159.7 L1140.3 154.5 L1141.3 157.2 L1142.3 152.3 L1143.3 157.6 L1144.4 150.2 L1145.4 155.0 L1146.4 150.2 L1147.5 148.9 L1148.5 151.0 L1149.6 145.6 L1150.7 149.6 L1151.7 145.7 L1152.8 148.8 L1153.8 143.9 L1154.9 143.9 L1155.7 367.8 L1170.9 367.8 L1170.9 367.8 L1171.9 364.4 L1172.9 363.2 L1174.0 356.6 L1175.0 357.2 L1176.0 350.1 L1177.0 351.7 L1178.1 343.0 L1179.1 345.6 L1180.1 332.9 L1181.1 338.8 L1182.2 326.4 L1183.2 331.7 L1184.2 324.2 L1185.2 316.8 L1186.3 319.6 L1187.3 309.8 L1188.3 311.9 L1189.4 304.3 L1190.4 304.6 L1191.4 296.5 L1192.4 297.4 L1193.5 286.4 L1194.5 297.4 L1195.5 283.3 L1196.6 286.3 L1197.6 279.6 L1198.7 272.8 L1199.8 273.1 L1200.9 263.9 L1202.1 262.6 L1203.2 254.9 L1204.3 253.1 L1205.3 256.7 L1206.4 250.0 L1207.4 256.9 L1208.5 250.9 L1209.5 252.6 L1210.6 246.5 L1211.6 257.0 L1212.7 247.1 L1213.7 255.5 L1214.7 247.5 L1215.8 254.6 L1216.8 245.4 L1217.9 253.1 L1218.9 247.7 L1220.0 251.4 L1221.0 244.0 L1222.0 252.2 L1223.1 247.1 L1224.1 251.4 L1225.2 242.9 L1226.2 251.1 L1227.3 244.0 L1228.3 247.9 L1229.3 243.4 L1230.4 246.5 L1231.4 244.4 L1232.5 248.8 L1233.5 243.8 L1234.6 245.7 L1235.6 241.1 L1236.7 248.5 L1237.7 243.8 L1238.8 236.4 L1239.9 236.0 L1241.0 227.3 L1242.1 226.2 L1243.2 222.4 L1244.3 205.7 L1245.5 204.7 L1246.6 194.8 L1247.7 187.3 L1248.8 191.5 L1249.9 175.6 L1251.1 178.0 L1252.2 166.6 L1253.3 168.0 L1254.4 159.6 L1255.5 158.4 L1256.5 161.7 L1257.6 155.2 L1258.7 158.5 L1259.7 150.9 L1260.8 156.9 L1261.9 154.9 L1262.9 156.8 L1264.0 151.8 L1265.1 157.6 L1266.1 152.7 L1267.2 154.8 L1268.3 151.8 L1269.3 156.6 L1270.4 151.7" fill="none" stroke="#2b6592" stroke-width="0.95" stroke-linejoin="round"/>
<path d="M505.4 586.9 L506.5 593.5 L507.5 596.0 L508.3 596.0 L508.9 631.5 L509.9 631.5 L511.0 631.5 L512.0 631.5 L513.0 631.5 L514.1 631.5 L515.1 631.5 L516.1 631.5 L517.2 631.5 L518.2 631.5 L519.2 631.5 L520.3 631.5 L521.3 631.5 L522.3 631.5 L523.4 631.5 L524.4 631.5 L524.4 631.5 L525.4 625.3 L526.5 615.1 L527.5 610.0 L528.5 599.8 L529.6 589.1 L530.7 586.7 L531.9 573.8 L533.0 567.4 L534.1 558.5 L535.2 550.5 L536.3 546.6 L537.5 539.1 L538.6 536.8 L539.7 527.1 L540.7 525.5 L541.6 526.1 L542.6 528.4 L543.7 523.7 L544.7 528.4 L545.7 526.6 L546.8 530.4 L547.8 527.3 L548.8 530.8 L549.9 525.6 L550.9 528.6 L552.0 527.4 L553.1 519.8 L554.3 520.1 L555.4 512.6 L556.5 511.9 L557.6 511.6 L558.7 503.8 L559.9 506.0 L561.0 498.8 L562.1 497.2 L563.2 498.0 L564.2 486.1 L565.3 490.5 L566.4 483.7 L567.5 486.6 L568.5 478.0 L569.6 478.5 L570.7 475.9 L571.7 468.5 L572.8 469.7 L573.9 461.5 L575.0 462.3 L576.0 454.0 L577.1 452.1 L578.1 451.3 L579.2 444.9 L580.2 443.7 L581.3 438.2 L582.4 437.7 L583.4 432.3 L584.5 431.9 L585.5 427.8 L586.5 425.2 L587.6 430.5 L588.6 427.3 L589.7 429.6 L590.7 425.1 L591.7 428.9 L592.8 424.9 L593.8 429.1 L594.9 426.8 L595.9 431.5 L597.0 426.0 L598.0 430.9 L599.0 427.1 L600.1 431.4 L601.1 427.2 L602.2 429.3 L603.2 428.8 L604.3 432.1 L605.4 439.7 L606.6 439.3 L607.7 450.5 L608.8 452.1 L609.8 454.9 L610.9 460.8 L612.0 460.8 L613.0 467.9 L614.0 463.6 L615.1 475.6 L616.2 475.5 L617.2 479.5 L618.3 495.3 L619.4 505.0 L620.5 520.5 L621.6 530.4 L622.7 546.1 L623.8 557.5 L624.7 562.0 L625.6 570.5 L626.6 572.4 L627.5 580.8 L628.6 586.0 L629.7 588.8 L630.9 596.5 L632.0 595.8 L633.1 602.6 L634.3 611.6 L635.5 611.3 L636.6 630.1 L637.8 631.5 L637.8 631.5 L653.3 631.5 L653.3 631.5 L654.3 624.3 L655.3 622.6 L656.4 611.6 L657.4 607.2 L658.3 601.9 L659.2 592.1 L660.2 590.6 L661.1 581.3 L662.2 573.0 L663.3 568.7 L664.5 558.4 L665.6 555.2 L666.7 547.4 L667.9 536.7 L669.0 532.6 L670.2 520.6 L671.4 516.0 L672.4 517.1 L673.5 513.3 L674.5 516.9 L675.5 514.7 L676.5 518.1 L677.6 514.5 L678.6 519.4 L679.6 515.1 L680.7 516.8 L681.7 516.0 L682.8 509.8 L683.9 513.4 L685.1 507.0 L686.2 506.3 L687.3 502.8 L688.4 496.6 L689.4 498.1 L690.5 490.6 L691.6 492.5 L692.7 485.9 L693.7 485.4 L694.8 480.5 L695.8 474.0 L696.8 476.3 L697.9 469.0 L698.9 470.3 L699.9 461.5 L700.9 464.2 L701.9 455.5 L702.9 456.1 L704.0 450.7 L705.0 451.1 L706.0 445.0 L707.1 438.5 L708.1 438.7 L709.2 430.5 L710.2 431.4 L711.3 423.7 L712.3 423.6 L713.4 416.6 L714.5 413.2 L715.7 414.4 L716.8 411.4 L718.0 414.3 L719.1 409.5 L720.2 408.7 L721.3 411.7 L722.4 408.0 L723.4 412.6 L724.5 408.0 L725.6 410.7 L726.7 408.0 L727.8 410.4 L728.9 408.0 L729.9 410.9 L731.0 409.0 L732.1 409.5 L733.2 414.5 L734.2 414.3 L735.3 420.3 L736.4 418.9 L737.5 426.6 L738.5 427.0 L739.6 431.8 L740.6 436.7 L741.7 436.7 L742.8 445.6 L743.8 446.4 L744.9 453.1 L745.9 452.4 L747.0 461.3 L748.0 463.3 L749.0 473.2 L750.1 490.6 L751.1 496.7 L752.2 513.6 L753.2 522.3 L754.3 536.7 L755.4 547.0 L756.4 560.6 L757.5 568.0 L758.6 570.7 L759.8 581.0 L760.9 581.1 L762.0 590.5 L763.2 592.7 L764.5 593.5 L765.5 602.9 L766.4 619.8 L767.4 631.5 L767.4 631.5 L783.0 631.5 L783.0 631.5 L784.0 620.2 L785.0 618.1 L786.0 608.1 L787.1 604.5 L788.1 595.5 L789.1 591.4 L790.1 582.9 L791.2 572.6 L792.3 569.9 L793.4 559.6 L794.5 557.5 L795.7 545.1 L796.8 542.2 L797.9 532.0 L799.0 527.1 L800.0 529.1 L801.0 525.3 L802.0 528.9 L803.0 524.2 L804.0 530.0 L805.1 526.2 L806.1 530.5 L807.1 528.1 L808.1 530.7 L809.1 526.4 L810.1 529.1 L811.2 526.7 L812.3 514.9 L813.5 519.4 L814.6 512.3 L815.7 511.4 L816.8 504.8 L817.9 499.9 L819.0 500.1 L820.1 488.9 L821.3 494.0 L822.4 486.4 L823.5 484.5 L824.6 483.4 L825.7 476.9 L826.8 477.3 L828.0 471.6 L829.1 473.6 L830.2 464.8 L831.3 467.1 L832.4 462.2 L833.4 457.1 L834.4 458.5 L835.4 451.3 L836.4 451.1 L837.4 444.1 L838.5 444.1 L839.5 437.1 L840.5 437.8 L841.5 433.5 L842.5 434.2 L843.5 427.8 L844.5 425.2 L845.6 430.9 L846.6 425.2 L847.7 430.1 L848.7 424.9 L849.7 429.9 L850.8 422.2 L851.8 429.2 L852.9 424.3 L853.9 429.6 L854.9 424.0 L856.0 429.2 L857.0 425.5 L858.1 428.3 L859.1 426.8 L860.1 427.3 L861.2 433.4 L862.2 434.6 L863.3 441.6 L864.3 438.3 L865.3 445.2 L866.4 445.3 L867.4 454.0 L868.5 450.4 L869.5 459.0 L870.5 457.7 L871.6 463.0 L872.6 464.5 L873.7 469.2 L874.7 471.4 L875.8 484.2 L876.9 502.9 L878.0 512.0 L879.2 529.8 L880.3 540.9 L881.4 562.9 L882.5 570.0 L883.6 586.9 L884.6 592.9 L885.6 593.7 L886.6 603.9 L887.6 602.6 L888.6 612.6 L889.7 609.8 L890.7 616.3 L891.7 615.8 L892.7 625.0 L893.7 627.4 L894.7 631.5 L894.7 631.5 L912.1 631.5 L912.1 631.5 L913.1 623.7 L914.1 620.4 L915.1 611.9 L916.2 609.9 L917.2 599.8 L918.2 598.8 L919.2 589.4 L920.2 581.5 L921.2 578.8 L922.2 569.7 L923.2 568.2 L924.2 557.5 L925.2 557.7 L926.2 547.8 L927.2 545.6 L928.2 538.3 L929.2 535.9 L930.2 541.2 L931.2 537.7 L932.2 540.0 L933.2 535.3 L934.3 538.9 L935.3 535.3 L936.3 540.5 L937.3 535.2 L938.3 540.8 L939.3 538.3 L940.4 531.7 L941.5 533.0 L942.6 526.0 L943.8 526.7 L944.9 517.3 L946.0 516.0 L947.0 515.0 L948.1 508.9 L949.1 510.2 L950.2 503.6 L951.2 504.4 L952.3 496.3 L953.3 498.9 L954.4 490.9 L955.4 491.0 L956.5 486.0 L957.5 485.8 L958.6 479.5 L959.6 480.1 L960.7 471.9 L961.7 473.4 L962.8 466.8 L963.8 466.8 L964.9 467.2 L966.0 459.1 L967.1 461.5 L968.2 455.8 L969.4 459.2 L970.5 452.1 L971.6 456.4 L972.7 451.1 L973.8 447.7 L974.9 452.6 L976.0 448.8 L977.2 450.9 L978.3 447.0 L979.4 450.7 L980.5 442.5 L981.6 448.1 L982.6 452.1 L983.6 450.6 L984.6 454.5 L985.6 452.4 L986.6 459.1 L987.7 456.4 L988.7 463.4 L989.7 459.6 L990.7 464.7 L991.7 461.9 L992.7 466.8 L993.7 475.3 L994.7 470.0 L995.8 478.4 L996.8 478.3 L997.8 484.8 L998.8 482.5 L999.8 490.4 L1000.8 490.3 L1001.9 495.5 L1002.9 495.2 L1003.9 500.3 L1005.0 516.5 L1006.1 525.6 L1007.2 547.9 L1008.4 559.6 L1009.5 576.4 L1010.6 587.0 L1011.7 605.1 L1012.8 609.4 L1013.9 610.9 L1015.0 618.1 L1016.2 616.4 L1017.3 624.6 L1018.4 622.5 L1019.5 628.2 L1020.6 631.5 L1020.6 631.5 L1041.7 631.5 L1041.7 631.5 L1042.8 626.7 L1043.9 614.9 L1045.0 611.5 L1046.2 602.3 L1047.3 597.6 L1048.4 586.6 L1049.5 583.7 L1050.6 575.8 L1051.7 567.3 L1052.8 562.7 L1053.9 554.2 L1055.1 550.5 L1056.2 539.1 L1057.3 535.3 L1058.4 527.1 L1059.4 525.9 L1060.4 531.5 L1061.5 527.5 L1062.5 534.6 L1063.5 526.5 L1064.5 535.9 L1065.5 527.1 L1066.5 532.1 L1067.6 527.8 L1068.6 532.3 L1069.6 531.7 L1070.7 524.3 L1071.8 525.8 L1072.9 518.5 L1074.0 518.1 L1075.1 511.4 L1076.1 506.3 L1077.2 506.2 L1078.2 498.7 L1079.2 498.6 L1080.3 489.5 L1081.3 490.7 L1082.3 482.2 L1083.3 486.0 L1084.4 474.4 L1085.4 476.7 L1086.4 466.2 L1087.5 469.3 L1088.5 462.2 L1089.5 456.2 L1090.5 457.5 L1091.6 452.0 L1092.6 452.3 L1093.6 447.3 L1094.6 446.8 L1095.7 441.2 L1096.7 442.2 L1097.7 434.8 L1098.7 435.1 L1099.8 429.8 L1100.8 431.0 L1101.8 424.7 L1102.9 421.3 L1104.0 425.8 L1105.1 417.1 L1106.2 421.1 L1107.4 416.5 L1108.5 417.5 L1109.6 412.4 L1110.7 413.6 L1111.7 414.3 L1112.7 411.7 L1113.8 418.9 L1114.8 411.2 L1115.8 415.2 L1116.8 412.7 L1117.8 416.2 L1118.8 413.3 L1119.9 417.6 L1120.9 414.5 L1121.9 415.6 L1122.9 422.1 L1124.0 420.0 L1125.0 428.5 L1126.1 427.4 L1127.1 435.9 L1128.1 435.1 L1129.2 442.9 L1130.2 443.5 L1131.3 452.0 L1132.3 449.8 L1133.3 457.2 L1134.4 456.8 L1135.4 465.2 L1136.5 465.2 L1137.5 471.4 L1138.6 487.2 L1139.7 493.5 L1140.8 507.9 L1142.0 515.8 L1143.1 534.6 L1144.2 540.2 L1145.3 560.9 L1146.4 567.1 L1147.5 569.4 L1148.6 579.2 L1149.7 579.2 L1150.8 588.5 L1152.0 588.8 L1153.1 599.0 L1154.2 599.0 L1155.3 605.1 L1156.4 631.5 L1156.4 631.5 L1170.9 631.5 L1170.9 631.5 L1172.0 624.6 L1173.1 612.5 L1174.2 609.5 L1175.4 598.3 L1176.5 593.5 L1177.6 584.9 L1178.6 577.6 L1179.6 574.6 L1180.6 566.6 L1181.6 564.5 L1182.6 553.4 L1183.7 550.9 L1184.7 542.0 L1185.7 540.4 L1186.7 530.8 L1187.7 527.6 L1188.7 520.5 L1189.7 518.7 L1190.7 520.8 L1191.7 517.0 L1192.7 522.2 L1193.7 518.5 L1194.8 521.1 L1195.8 517.8 L1196.8 522.6 L1197.8 518.6 L1198.8 521.0 L1199.8 519.0 L1200.9 514.4 L1202.0 515.0 L1203.1 506.8 L1204.2 505.6 L1205.4 497.9 L1206.5 499.6 L1207.6 490.1 L1208.7 489.1 L1209.8 489.0 L1210.8 480.4 L1211.9 483.7 L1213.0 471.8 L1214.0 477.4 L1215.1 469.6 L1216.2 471.0 L1217.2 462.9 L1218.3 465.3 L1219.4 458.1 L1220.4 459.8 L1221.5 452.5 L1222.5 453.0 L1223.6 445.5 L1224.7 447.5 L1225.7 441.5 L1226.8 440.6 L1227.9 432.7 L1228.9 437.1 L1230.0 427.9 L1231.1 431.5 L1232.1 423.3 L1233.2 422.2 L1234.2 423.7 L1235.3 420.9 L1236.3 426.9 L1237.4 422.0 L1238.4 426.7 L1239.4 422.5 L1240.5 427.1 L1241.5 424.4 L1242.6 429.0 L1243.6 426.1 L1244.6 429.1 L1245.7 425.6 L1246.7 431.8 L1247.8 427.0 L1248.8 429.3 L1249.8 435.6 L1250.9 432.6 L1251.9 438.5 L1252.9 436.7 L1254.0 446.7 L1255.0 442.5 L1256.0 451.4 L1257.0 447.9 L1258.1 454.8 L1259.1 454.5 L1260.1 460.4 L1261.2 459.6 L1262.2 464.8 L1263.3 480.8 L1264.4 489.3 L1265.5 510.0 L1266.7 521.3 L1267.8 537.7 L1268.9 548.6 L1270.0 566.1" fill="none" stroke="#f0a13f" stroke-width="0.9" stroke-linejoin="round"/>
</svg>

<!-- time controls -->
<div class="btn" style="left:505px;top:660px;width:32px;height:32px;border-radius:3px"></div>
<svg style="left:518px;top:673px" width="5" height="6.5" viewBox="0 0 5 6.5"><path d="M4.5 0V6.3L1.2 3.15Z" fill="#444"/></svg>
<div class="btn" style="left:541px;top:660px;width:33px;height:32px;border-radius:3px"></div>
<svg style="left:550px;top:668px" width="15" height="15" viewBox="0 0 15 15" fill="none" stroke="#8f8f8f" stroke-width="0.95"><rect x="1.05" y="1.4" width="12.8" height="13.05" rx="0.4"/><path d="M1 5.3H14"/><g fill="#8f8f8f" stroke="none"><rect x="3.6" y="0" width="1.9" height="2.85"/><rect x="9.6" y="0" width="1.9" height="2.85"/><rect x="8.5" y="9.1" width="3.95" height="3.85"/></g></svg>
<div class="btn" style="left:578px;top:660px;width:33px;height:32px;border-radius:3px;border-color:#c9d0d8"></div>
<svg style="left:587px;top:669px" width="15" height="15" viewBox="0 0 15 15" fill="none" stroke="#8f8f8f" stroke-width="1.0"><circle cx="7.45" cy="7.0" r="6.4"/><path d="M7.0 2.9V7.5H11.5"/></svg>

<div class="btn" style="left:801px;top:660px;width:32px;height:32px;border-radius:3px"></div>
<svg style="left:808px;top:668px" width="18" height="17" viewBox="0 0 18 17" fill="none" stroke="#666" stroke-width="0.8"><path d="M1.15 0.2V15.6H17"/><path d="M2.2 7.6H15.4"/><path d="M2.4 7.2 Q3.8 4.6 7 4.1 Q9.6 3.8 11.5 3 Q13 2.4 13.9 1.6" stroke-width="1.25"/><path d="M2.4 14.5H5.1V12.9H8.3V11.3H11.1V9.7H13.9"/></svg>
<div class="btn" style="left:837px;top:660px;width:103.5px;height:32px;border-radius:3px"></div>
<div class="sep" style="left:908px;top:661px;width:1px;height:30px"></div>
<div class="t" style="left:849px;top:667.5px;font-size:15px;color:#222;transform:scaleX(0.935);transform-origin:0 0">8 hours</div>
<svg style="left:918px;top:668px" width="12" height="15" viewBox="0 0 12 15" fill="none" stroke="#555" stroke-width="1.5"><rect x="1" y="6.2" width="10" height="8" rx="1"/><path d="M3.3 6V3.8 Q3.3 1 6 1 Q8.7 1 8.7 3.5"/><circle cx="6" cy="10.2" r="1" fill="#555" stroke="none"/></svg>
<div class="btn" style="left:944px;top:660px;width:32px;height:32px;border-radius:3px;border-color:#ececec"></div>
<svg style="left:952px;top:668.5px" width="15" height="15" viewBox="0 0 15 15" fill="none" stroke="#cfcfcf" stroke-width="1.3"><path d="M2.6 6.3 A5.5 5.5 0 1 1 3.8 10.6"/><path d="M0.6 5 L2.6 7.6 L4.9 5.3" /><path d="M8 4.2V7.9L10.5 9.4"/></svg>

<div class="btn" style="left:1171px;top:660px;width:33px;height:32px;border-radius:3px"></div>
<svg style="left:1180px;top:668px" width="15" height="15" viewBox="0 0 15 15" fill="none" stroke="#8f8f8f" stroke-width="0.95"><rect x="1.05" y="1.4" width="12.8" height="13.05" rx="0.4"/><path d="M1 5.3H14"/><g fill="#8f8f8f" stroke="none"><rect x="3.6" y="0" width="1.9" height="2.85"/><rect x="9.6" y="0" width="1.9" height="2.85"/><rect x="8.5" y="9.1" width="3.95" height="3.85"/></g></svg>
<div class="btn" style="left:1208px;top:660px;width:33px;height:32px;border-radius:3px;border-color:#c9d0d8"></div>
<svg style="left:1217px;top:669px" width="15" height="15" viewBox="0 0 15 15" fill="none" stroke="#8f8f8f" stroke-width="1.0"><circle cx="7.45" cy="7.0" r="6.4"/><path d="M7.0 2.9V7.5H11.5"/></svg>
<div class="btn" style="left:1240px;top:660px;width:32px;height:32px;border-radius:3px"></div>
<svg style="left:1254px;top:673px" width="5" height="6.5" viewBox="0 0 5 6.5"><path d="M0.5 0V6.3L3.8 3.15Z" fill="#444"/></svg>

<!-- navigator -->
<div class="a" style="left:504.8px;top:699.6px;width:764.5px;height:30.8px;border:1px solid #dcdcdc;border-right:none"></div>
<svg style="left:0;top:0" width="1280" height="800" viewBox="0 0 1280 800">
<clipPath id="nc"><rect x="505.6" y="700.5" width="763" height="29.2"/></clipPath>
<g clip-path="url(#nc)">
<path d="M505.5 703.4 L507.2 728.7 L508.6 703.8 L509.9 728.9 L511.6 702.3 L512.5 729.0 L514.1 702.1 L515.8 728.9 L517.3 712.2 L518.2 728.5 L519.4 702.1 L520.7 729.1 L522.0 703.9 L523.5 728.7 L524.7 705.0 L526.3 728.9 L527.5 702.7 L528.5 729.0 L529.7 704.5 L531.5 729.1 L532.4 702.6 L533.7 729.2 L535.0 702.2 L536.6 728.5 L537.6 703.0 L539.1 728.4 L540.3 714.4 L541.3 728.8 L542.6 702.6 L543.6 728.9 L544.6 703.3 L545.8 729.2 L547.4 702.9 L548.5 728.7 L550.2 703.9 L552.0 728.5 L553.1 704.3 L554.3 728.4 L555.2 703.7 L556.7 728.6 L558.0 704.9 L559.4 729.1 L560.5 702.5 L562.1 728.5 L563.2 704.2 L564.3 729.2 L566.0 703.8 L566.9 728.3 L568.7 702.7 L569.8 729.0 L571.3 702.9 L572.8 728.4 L573.9 703.7 L575.4 728.6 L577.1 710.2 L578.4 728.4 L579.5 703.1 L580.5 728.6 L582.2 704.9 L583.7 728.8 L584.7 715.3 L586.3 729.2 L587.2 703.9 L588.7 728.6 L590.5 702.2 L592.1 729.1 L593.7 704.1 L595.4 728.6 L596.9 704.7 L598.2 729.0 L599.9 703.7 L601.1 728.8 L602.6 702.2 L604.4 729.1 L605.9 703.2 L607.3 728.7 L609.0 702.3 L609.9 728.8 L611.2 702.7 L612.6 728.9 L614.3 710.4 L615.8 728.5 L616.9 704.7 L618.2 729.1 L619.4 704.0 L620.7 729.0 L622.4 704.6 L623.8 728.6 L624.8 703.5 L626.5 728.9 L628.3 702.8 L629.6 728.5 L630.7 703.2 L632.0 728.6 L633.7 704.9 L634.6 728.3 L636.3 702.1 L637.7 728.6 L639.3 702.1 L640.6 728.3 L642.3 702.7 L643.2 728.9 L644.5 703.9 L646.2 729.2 L647.7 702.6 L648.7 728.3 L650.1 704.1 L651.2 728.6 L652.7 703.6 L654.3 728.7 L655.9 704.7 L657.7 729.0 L658.7 703.4 L660.4 728.6 L661.8 704.6 L663.6 728.7 L665.0 702.6 L666.7 728.9 L668.2 702.6 L670.0 729.2 L671.4 704.4 L673.1 729.1 L674.3 702.2 L675.7 729.0 L677.1 702.1 L678.0 729.0 L679.1 703.0 L680.1 728.4 L681.5 704.2 L683.0 729.2 L684.3 704.8 L685.4 728.8 L686.6 704.2 L688.0 729.1 L689.4 702.9 L691.0 729.1 L692.1 704.6 L693.5 728.8 L694.6 703.6 L696.0 728.3 L697.8 703.5 L699.4 728.8 L700.7 712.3 L702.0 729.2 L703.7 702.8 L704.8 728.7 L706.4 704.7 L707.6 728.5 L709.0 704.8 L710.6 728.3 L711.7 702.7 L712.9 728.6 L714.4 702.3 L715.4 728.8 L716.5 702.6 L717.8 728.6 L719.1 703.6 L720.1 728.9 L721.6 703.6 L723.1 729.1 L724.2 704.2 L725.9 728.6 L727.1 704.8 L728.9 729.1 L729.9 702.7 L731.0 728.4 L732.7 703.3 L733.7 728.7 L735.2 702.1 L736.7 729.1 L738.5 702.3 L740.1 728.8 L741.6 708.8 L742.5 728.8 L743.9 703.7 L745.0 728.5 L746.6 705.0 L747.6 728.4 L749.4 703.4 L750.6 728.7 L751.9 703.3 L752.8 728.9 L754.5 702.5 L756.1 728.7 L757.1 702.5 L758.0 729.1 L759.7 704.1 L761.1 728.7 L762.6 703.5 L764.2 728.5 L765.9 704.2 L767.5 728.7 L769.3 704.6 L770.8 729.0 L772.1 710.7 L773.4 728.3 L774.7 703.9 L775.8 729.2 L777.3 703.0 L778.7 728.8 L779.9 705.0 L781.5 729.0 L783.2 702.1 L784.8 728.5 L786.1 702.2 L787.3 728.4 L788.4 704.7 L789.8 729.2 L791.2 705.0 L792.8 728.4 L794.3 715.4 L795.3 728.7 L796.4 703.5 L797.3 729.2 L798.6 703.6 L799.8 728.6 L801.3 703.7 L802.9 728.6 L803.8 709.3 L805.3 728.7 L807.1 715.9 L808.8 728.4 L810.5 703.3 L812.3 728.5 L813.7 704.8 L815.0 729.2 L816.6 703.8 L818.1 728.7 L819.2 702.2 L820.2 728.7 L821.7 703.4 L823.1 728.7 L824.7 703.6 L826.5 729.0 L827.6 702.3 L829.2 728.9 L830.4 702.8 L831.8 728.8 L833.3 704.3 L834.4 729.2 L836.1 708.5 L837.3 728.7 L838.7 702.3 L839.7 728.4 L841.2 703.7 L842.4 728.7 L843.5 703.0 L845.2 728.4 L846.2 704.4 L847.8 728.5 L849.1 702.8 L850.3 728.9 L852.1 703.0 L853.7 729.1 L854.9 703.1 L856.6 728.4 L857.6 703.7 L859.1 728.6 L860.7 702.2 L862.2 728.4 L863.4 704.2 L864.6 728.4 L865.8 704.2 L866.8 728.9 L868.2 704.8 L869.9 728.7 L871.5 702.9 L872.8 729.1 L874.5 702.7 L875.7 728.6 L877.0 703.2 L878.4 729.0 L879.8 704.5 L880.8 729.0 L882.5 712.1 L883.9 728.8 L885.7 704.0 L886.6 728.8 L888.3 702.3 L889.8 729.1 L890.8 703.9 L892.4 728.9 L893.5 702.7 L894.9 729.0 L896.1 703.0 L897.6 728.7 L899.0 704.2 L900.7 728.7 L902.4 704.0 L904.0 729.1 L905.7 704.9 L907.1 728.9 L908.7 703.3 L909.7 729.0 L911.5 703.1 L912.6 728.7 L913.8 710.5 L914.8 728.9 L916.4 711.7 L917.8 729.1 L918.7 702.3 L919.8 728.5 L921.4 703.8 L922.4 728.6 L923.5 704.3 L924.9 729.0 L926.2 702.8 L927.9 728.6 L929.3 704.9 L930.4 728.3 L932.2 704.4 L933.5 728.8 L934.7 705.0 L935.8 728.3 L937.1 703.1 L938.7 728.8 L939.7 702.5 L940.9 729.1 L942.2 703.9 L943.4 728.8 L944.4 714.6 L946.1 729.0 L947.0 702.8 L948.0 728.7 L949.3 704.9 L951.0 728.6 L952.6 703.3 L953.6 729.0 L954.7 703.6 L955.7 729.0 L956.9 710.4 L958.2 728.9 L959.5 704.1 L960.7 728.7 L962.5 704.5 L963.4 728.6 L964.9 702.7 L966.2 728.3 L968.0 704.4 L969.5 728.6 L970.7 703.6 L971.9 728.7 L973.4 702.8 L975.0 728.6 L976.7 703.7 L977.9 729.0 L978.9 702.4 L980.4 728.9 L981.5 703.2 L982.9 728.4 L984.0 702.5 L985.3 728.4 L987.0 703.3 L988.5 729.0 L990.1 703.2 L991.4 728.3 L992.7 704.1 L994.3 728.9 L995.7 702.1 L996.9 728.9 L997.9 703.1 L999.5 729.0 L1001.0 702.5 L1002.7 728.8 L1003.9 703.5 L1005.5 729.2 L1006.8 704.1 L1007.9 729.2 L1009.4 702.6 L1010.5 728.8 L1012.0 703.0 L1013.3 728.7 L1014.3 704.9 L1016.0 728.8 L1017.4 703.7 L1019.1 729.2 L1020.7 703.8 L1022.4 728.6 L1024.1 702.7 L1025.7 728.5 L1027.1 709.4 L1028.9 729.1 L1030.4 702.9 L1032.0 728.6 L1033.4 709.6 L1034.7 728.4 L1036.0 703.7 L1037.3 728.5 L1038.8 703.0 L1039.7 728.9 L1040.7 704.9 L1042.0 728.7 L1043.5 704.1 L1045.1 728.7 L1046.9 704.5 L1048.1 728.7 L1049.5 704.7 L1050.9 728.7 L1052.6 713.8 L1054.3 729.0 L1055.8 704.3 L1057.2 728.4 L1058.2 703.3 L1059.5 728.3 L1061.0 703.6 L1062.2 728.7 L1063.3 702.2 L1065.1 728.9 L1066.7 703.3 L1067.8 729.0 L1069.3 704.7 L1070.9 728.4 L1072.3 710.0 L1073.4 728.6 L1074.4 704.7 L1075.6 728.6 L1077.1 715.2 L1078.2 728.7 L1080.0 704.9 L1081.1 728.6 L1082.8 704.7 L1084.5 728.6 L1085.8 702.5 L1087.6 728.5 L1089.0 702.6 L1090.0 728.4 L1091.5 702.9 L1093.2 728.9 L1094.2 704.1 L1095.5 728.4 L1096.6 702.9 L1097.7 728.5 L1098.8 704.0 L1100.1 728.9 L1101.8 703.8 L1102.9 729.1 L1104.4 702.8 L1105.4 729.2 L1106.7 703.6 L1107.7 728.8 L1108.8 702.8 L1109.8 728.6 L1111.4 702.7 L1112.8 728.5 L1114.5 711.7 L1116.0 728.6 L1117.8 703.5 L1119.2 728.9 L1120.4 704.0 L1121.8 728.8 L1123.4 704.1 L1125.2 728.5 L1126.8 702.5 L1127.9 728.7 L1129.5 704.4 L1130.6 728.7 L1131.7 703.7 L1132.6 728.8 L1134.2 703.7 L1135.2 728.4 L1136.2 703.5 L1137.5 728.5 L1139.1 702.2 L1140.5 728.8 L1142.1 702.7 L1143.3 728.3 L1144.5 703.9 L1145.6 728.8 L1146.6 704.5 L1147.7 728.4 L1149.2 704.5 L1150.2 728.7 L1151.4 702.6 L1152.4 728.7 L1153.9 705.0 L1155.3 729.0 L1156.2 702.7 L1157.2 728.7 L1158.4 708.3 L1160.2 729.0 L1161.7 702.7 L1163.1 728.5 L1164.5 704.8 L1165.7 729.2 L1167.1 702.1 L1168.6 728.4 L1169.8 704.1 L1171.2 729.1 L1172.5 703.2 L1173.8 729.0 L1174.9 703.0 L1176.3 728.4 L1177.4 702.6 L1178.5 728.7 L1180.3 704.0 L1181.4 728.6 L1182.4 704.1 L1183.5 728.3 L1184.6 702.8 L1186.3 728.9 L1187.5 703.1 L1189.2 728.6 L1190.8 704.2 L1191.7 728.6 L1193.0 702.2 L1194.2 729.0 L1195.5 702.2 L1196.6 728.3 L1197.7 710.5 L1199.0 728.8 L1200.0 704.1 L1201.5 728.9 L1202.6 702.6 L1204.1 728.7 L1205.4 704.6 L1206.5 728.6 L1207.6 713.0 L1209.0 729.0 L1210.8 702.9 L1212.5 728.5 L1214.0 704.0 L1215.7 728.5 L1217.2 702.3 L1218.4 728.4 L1219.7 703.0 L1220.8 728.4 L1222.1 703.4 L1223.6 728.5 L1224.6 703.0 L1225.6 728.8 L1227.2 703.7 L1228.1 728.7 L1229.3 702.2 L1230.3 728.7 L1231.7 703.4 L1232.8 728.3 L1234.0 704.7 L1235.2 728.9 L1236.2 703.4 L1238.0 728.6 L1239.4 704.8 L1240.9 728.9 L1242.1 703.2 L1243.8 729.1 L1245.0 709.1 L1246.4 728.6 L1247.6 704.9 L1248.7 728.5 L1250.2 712.4 L1251.4 728.5 L1252.8 704.0 L1254.3 728.8 L1255.9 704.9 L1257.1 729.1 L1258.3 704.1 L1259.8 729.2 L1261.5 702.5 L1262.8 728.8 L1264.0 702.9 L1265.4 728.5 L1266.5 703.0 L1267.9 728.4" fill="none" stroke="#3f8cba" stroke-width="0.8"/>
<path d="M505.5 704.8 L507.2 728.4 L508.6 703.3 L509.7 728.5 L511.0 702.7 L511.9 728.4 L513.4 703.3 L515.0 728.6 L515.9 704.3 L517.4 728.9 L519.2 703.1 L520.4 728.8 L521.9 702.9 L523.2 728.9 L524.7 703.3 L525.7 728.5 L526.9 704.4 L527.9 728.4 L528.9 702.8 L530.5 728.6 L531.7 702.9 L533.3 728.8 L534.5 702.3 L536.0 729.0 L537.1 703.6 L538.6 729.2 L539.6 711.3 L540.5 729.0 L542.0 704.9 L543.8 728.8 L545.6 704.2 L547.4 728.6 L548.4 702.2 L549.5 729.1 L551.3 702.6 L552.7 728.5 L554.0 704.4 L555.3 729.1 L556.6 703.0 L558.3 729.1 L559.8 703.2 L561.4 728.9 L562.5 702.9 L564.1 728.8 L565.5 704.5 L567.0 728.6 L568.4 704.5 L570.2 728.4 L571.6 703.6 L573.0 728.7 L574.3 711.0 L575.9 728.4 L577.6 702.6 L578.6 728.7 L579.9 702.2 L581.2 728.9 L582.6 703.7 L583.8 729.1 L584.8 704.6 L586.1 729.0 L587.6 703.8 L588.8 728.6 L590.0 704.9 L591.2 728.7 L592.8 703.4 L594.0 728.6 L595.0 702.7 L596.6 728.8 L597.6 703.4 L599.0 728.7 L600.7 702.8 L601.8 729.2 L603.3 702.1 L604.4 728.6 L605.5 704.5 L607.0 728.7 L608.6 715.3 L610.0 728.5 L611.8 704.7 L612.7 728.8 L613.8 704.2 L615.3 728.8 L616.9 704.5 L618.3 728.6 L619.4 702.3 L620.4 728.7 L621.6 703.9 L623.3 728.7 L624.5 704.0 L626.3 728.6 L628.0 704.9 L629.0 728.6 L630.6 711.2 L632.1 729.0 L633.5 702.6 L634.5 728.6 L635.7 704.5 L637.0 728.5 L638.2 704.0 L639.2 729.0 L640.7 704.9 L642.1 728.7 L643.6 704.8 L645.1 728.7 L646.0 704.5 L647.3 728.4 L648.2 703.2 L649.8 728.9 L651.3 702.8 L652.7 728.4 L654.1 703.5 L655.1 728.4 L656.5 702.4 L657.7 728.9 L659.2 703.8 L660.3 728.6 L662.1 702.8 L663.4 728.8 L665.0 702.9 L666.0 729.0 L667.4 704.7 L668.9 729.2 L670.4 702.3 L672.2 728.4 L673.8 702.2 L675.4 728.9 L677.2 703.9 L678.3 728.8 L680.1 703.9 L681.2 729.0 L682.8 702.2 L683.8 728.5 L684.8 704.0 L686.6 728.3 L688.2 704.3 L689.6 729.0 L691.1 702.4 L692.3 728.8 L693.7 704.7 L695.3 728.4 L696.5 704.0 L698.2 728.5 L699.8 704.4 L700.8 728.8 L702.6 703.8 L703.9 729.0 L705.3 703.6 L707.1 729.0 L708.7 702.8 L710.4 728.9 L712.1 704.7 L713.5 728.6 L714.6 703.5 L716.1 728.4 L717.3 703.1 L718.6 728.4 L720.0 712.7 L721.8 729.0 L723.3 702.5 L724.8 729.0 L726.1 702.2 L727.2 729.0 L728.6 704.3 L729.5 728.7 L730.9 704.4 L732.4 728.6 L733.9 702.5 L735.7 728.3 L737.4 704.3 L738.4 729.0 L739.9 703.9 L741.7 728.9 L743.4 702.4 L744.8 728.8 L746.6 703.9 L748.0 729.2 L749.3 704.2 L750.5 728.6 L751.6 702.0 L752.8 728.4 L754.1 703.1 L755.7 728.9 L757.4 702.8 L758.8 728.5 L760.6 703.3 L761.7 728.4 L763.2 704.1 L764.9 729.2 L766.4 704.9 L767.5 729.0 L769.0 704.2 L770.4 728.8 L772.1 702.2 L773.3 729.0 L774.3 702.2 L775.3 728.7 L777.0 703.1 L778.5 728.6 L779.9 704.2 L781.4 728.9 L783.1 704.3 L784.7 728.6 L786.0 704.3 L787.6 729.1 L789.2 703.6 L790.2 728.7 L791.7 704.7 L793.0 728.5 L794.7 704.0 L795.7 729.1 L797.1 702.3 L798.5 729.0 L800.1 702.8 L801.2 728.9 L802.5 704.4 L803.6 728.6 L804.5 703.2 L806.1 728.5 L807.8 702.7 L809.3 728.6 L810.3 702.3 L811.4 729.1 L812.4 703.6 L813.9 728.3 L815.1 711.3 L816.3 728.7 L817.8 702.2 L818.9 729.0 L820.0 702.3 L820.9 728.5 L822.0 702.3 L823.3 728.7 L824.7 708.4 L826.2 728.3 L827.5 703.9 L828.4 728.7 L829.6 714.0 L831.4 728.8 L832.9 704.5 L834.5 728.7 L835.5 704.4 L837.0 728.6 L838.8 703.9 L840.4 728.5 L841.5 715.0 L842.8 728.8 L844.3 704.7 L845.3 728.8 L846.4 703.3 L847.4 728.8 L848.3 702.8 L849.3 729.0 L851.0 702.1 L852.1 729.0 L853.0 704.2 L854.2 728.4 L855.4 704.6 L856.4 729.1 L858.0 704.9 L859.0 729.0 L859.9 702.6 L861.1 728.5 L862.3 703.4 L863.7 728.8 L865.2 702.6 L866.8 729.0 L868.1 711.7 L869.6 729.2 L871.3 703.0 L873.0 729.2 L874.5 703.0 L875.4 728.8 L876.7 704.6 L877.8 728.4 L878.8 704.3 L880.0 728.5 L881.4 702.6 L882.6 728.6 L884.1 702.7 L885.5 729.1 L886.6 702.9 L887.7 728.7 L889.4 702.5 L890.7 728.8 L892.0 703.8 L893.5 728.7 L895.1 703.8 L896.9 728.5 L897.8 702.4 L898.8 729.0 L899.7 702.9 L900.7 728.7 L902.5 704.2 L904.2 728.8 L905.8 703.0 L907.3 729.0 L908.9 702.5 L910.1 728.5 L911.1 704.2 L912.3 728.3 L913.8 715.6 L915.6 729.0 L917.2 710.2 L918.3 728.3 L919.8 703.8 L921.4 728.5 L922.5 702.3 L924.2 728.7 L925.8 704.6 L927.0 729.2 L928.0 703.2 L929.5 728.6 L931.1 704.3 L932.3 728.9 L933.8 704.5 L935.5 728.9 L936.6 703.7 L938.0 728.6 L939.8 703.0 L941.5 728.6 L942.9 702.7 L944.2 728.9 L945.6 702.5 L946.9 728.8 L948.2 704.6 L949.7 728.8 L951.0 703.3 L952.3 728.4 L953.4 710.9 L954.6 728.7 L955.7 702.7 L956.9 728.5 L958.2 708.1 L959.5 729.1 L961.0 703.1 L962.5 729.0 L964.2 702.1 L965.8 728.7 L967.5 702.2 L968.9 728.7 L970.6 703.6 L971.6 729.0 L972.7 702.9 L973.6 728.6 L974.5 703.4 L975.4 728.7 L976.6 702.7 L977.8 728.3 L979.5 704.9 L981.0 728.8 L982.2 703.6 L983.3 728.7 L984.3 702.7 L985.8 728.6 L987.6 703.0 L988.8 729.1 L990.1 704.6 L991.4 728.6 L993.0 704.6 L994.3 728.5 L995.2 710.4 L996.5 729.1 L998.0 704.3 L999.2 728.7 L1000.3 702.1 L1002.0 728.3 L1003.4 702.7 L1004.3 728.8 L1005.9 703.4 L1007.6 728.3 L1009.3 704.5 L1011.0 728.6 L1012.5 703.4 L1013.7 729.1 L1014.9 708.5 L1016.6 728.6 L1017.8 705.0 L1018.8 728.8 L1020.2 703.8 L1021.3 729.2 L1022.8 703.7 L1024.3 728.5 L1025.9 703.4 L1027.1 729.2 L1028.8 704.7 L1030.3 728.7 L1031.8 703.6 L1033.6 728.8 L1034.5 704.4 L1035.7 728.7 L1036.8 703.3 L1038.2 728.9 L1039.7 702.2 L1040.7 728.6 L1042.0 714.5 L1043.0 729.0 L1044.7 705.0 L1045.6 728.6 L1046.9 704.0 L1048.6 728.4 L1049.6 704.0 L1051.1 728.8 L1052.5 703.0 L1053.6 728.6 L1054.7 702.9 L1056.1 728.3 L1057.3 704.4 L1058.5 729.0 L1060.1 704.0 L1061.7 728.6 L1062.9 702.8 L1064.2 728.8 L1065.3 709.7 L1066.3 728.9 L1068.0 703.6 L1069.3 728.4 L1070.8 704.3 L1072.0 728.9 L1073.5 702.5 L1074.8 728.8 L1076.4 702.4 L1078.2 728.5 L1079.2 704.4 L1080.5 728.7 L1081.5 703.9 L1082.8 729.1 L1084.1 703.2 L1085.3 728.9 L1086.8 711.2 L1087.9 728.8 L1088.9 703.5 L1090.7 728.6 L1091.9 703.0 L1093.0 728.5 L1094.5 714.8 L1095.5 728.6 L1096.9 703.4 L1097.9 728.9 L1099.0 702.3 L1100.6 728.4 L1101.5 702.6 L1102.5 729.2 L1103.4 704.2 L1104.6 729.0 L1105.7 704.3 L1107.4 729.0 L1109.0 704.6 L1109.9 728.5 L1111.5 703.6 L1112.8 728.3 L1114.5 703.7 L1115.9 729.1 L1117.2 703.6 L1118.2 729.0 L1119.7 703.0 L1121.0 728.6 L1122.0 704.5 L1123.7 729.0 L1124.9 704.7 L1126.1 728.7 L1127.6 715.5 L1128.5 729.0 L1129.8 704.9 L1131.1 728.8 L1132.6 715.9 L1134.0 729.0 L1135.4 702.2 L1136.5 729.2 L1138.2 702.9 L1139.9 728.8 L1141.1 703.6 L1142.5 728.4 L1143.9 714.0 L1145.3 728.4 L1146.5 704.7 L1147.7 728.7 L1149.4 703.8 L1150.8 728.6 L1152.6 702.8 L1153.9 729.0 L1155.5 714.4 L1157.2 728.4 L1158.3 702.7 L1159.3 728.8 L1160.9 703.4 L1162.4 729.0 L1164.2 704.1 L1165.1 728.6 L1166.2 704.9 L1167.2 728.6 L1168.5 703.9 L1169.7 728.9 L1170.9 704.7 L1172.5 728.8 L1174.1 704.3 L1175.4 728.9 L1176.9 703.8 L1178.3 728.8 L1179.5 708.5 L1180.6 728.4 L1181.8 704.9 L1183.5 728.9 L1185.2 704.0 L1186.9 728.4 L1187.8 704.9 L1189.3 729.2 L1191.1 703.6 L1192.5 728.9 L1193.5 711.1 L1195.1 729.1 L1196.8 704.6 L1198.1 728.7 L1199.4 702.7 L1200.8 728.3 L1202.2 702.2 L1203.1 728.5 L1204.5 704.3 L1206.0 729.0 L1207.3 703.6 L1209.1 729.1 L1210.0 704.1 L1211.7 729.1 L1213.0 703.2 L1214.1 729.1 L1215.6 704.5 L1217.2 728.3 L1218.6 702.9 L1220.4 728.3 L1222.1 704.0 L1223.4 729.1 L1224.8 703.7 L1225.9 728.8 L1227.0 702.1 L1227.9 729.1 L1229.0 704.7 L1230.5 728.6 L1232.1 702.5 L1233.2 729.2 L1234.9 703.2 L1236.7 728.4 L1238.1 702.6 L1239.3 728.5 L1240.7 702.7 L1241.7 728.5 L1243.3 702.9 L1244.3 728.3 L1245.5 703.5 L1246.7 729.0 L1248.2 702.7 L1249.4 728.8 L1250.7 704.3 L1252.0 728.5 L1253.0 702.8 L1254.7 728.7 L1255.7 702.6 L1256.7 728.7 L1257.7 703.5 L1259.4 729.2 L1260.8 704.5 L1262.1 729.0 L1263.0 702.5 L1264.4 728.9 L1265.9 704.5 L1266.9 728.6" fill="none" stroke="#f4b772" stroke-width="1.2"/>
</g>
</svg>
<div class="a" style="left:1269px;top:699.7px;width:2.6px;height:42.5px;background:#fff;border:0.8px solid #1a1a1a;border-radius:1.3px"></div>
<div class="a" style="left:1267.1px;top:707px;width:4.9px;height:17.8px;background:#222;border-radius:0.8px"></div>
<div class="a" style="left:1268.3px;top:733.1px;width:3.5px;height:5.8px;background:#999"></div>
<div class="a" style="left:504.5px;top:743px;width:767px;height:1.2px;background:#222"></div>
<div class="a" style="left:504.5px;top:743px;width:1px;height:4.5px;background:#222"></div>
<div class="a" style="left:1270.5px;top:743px;width:1px;height:4.5px;background:#222"></div>
<div class="a" style="left:594.0px;top:743px;width:1px;height:4.5px;background:#222"></div>
<div class="t" style="left:574.5px;top:749.2px;width:40px;text-align:center;font-size:10px;color:#333">Sep</div>
<div class="a" style="left:718.8px;top:743px;width:1px;height:4.5px;background:#222"></div>
<div class="t" style="left:699.3px;top:749.2px;width:40px;text-align:center;font-size:10px;color:#333">Oct</div>
<div class="a" style="left:847.9px;top:743px;width:1px;height:4.5px;background:#222"></div>
<div class="t" style="left:828.4px;top:749.2px;width:40px;text-align:center;font-size:10px;color:#333">Nov</div>
<div class="a" style="left:972.9px;top:743px;width:1px;height:4.5px;background:#222"></div>
<div class="t" style="left:953.4px;top:749.2px;width:40px;text-align:center;font-size:10px;color:#333">Dec</div>
<div class="a" style="left:1101.9px;top:743px;width:1px;height:4.5px;background:#222"></div>
<div class="t" style="left:1082.4px;top:749.2px;width:40px;text-align:center;font-size:10px;color:#333">2022</div>
<div class="a" style="left:1230.8px;top:743px;width:1px;height:4.5px;background:#222"></div>
<div class="t" style="left:1211.3px;top:749.2px;width:40px;text-align:center;font-size:10px;color:#333">Feb</div>

<!-- range buttons -->
<div class="btn" style="left:505.5px;top:768.5px;width:244px;height:23px;border-radius:3px"></div>
<div class="a" style="left:645.5px;top:769.5px;width:35px;height:21px;background:#eef4fa"></div>
<div class="sep" style="left:538px;top:769px;width:1px;height:22px"></div>
<div class="sep" style="left:574px;top:769px;width:1px;height:22px"></div>
<div class="sep" style="left:609px;top:769px;width:1px;height:22px"></div>
<div class="sep" style="left:645px;top:769px;width:1px;height:22px"></div>
<div class="sep" style="left:680.5px;top:769px;width:1px;height:22px"></div>
<div class="sep" style="left:711px;top:769px;width:1px;height:22px"></div>
<div class="t" style="left:506px;top:773.5px;width:32px;text-align:center;font-size:12px;color:#222">1D</div>
<div class="t" style="left:539px;top:773.5px;width:35px;text-align:center;font-size:12px;color:#222">1W</div>
<div class="t" style="left:575px;top:773.5px;width:34px;text-align:center;font-size:12px;color:#222">1M</div>
<div class="t" style="left:610px;top:773.5px;width:35px;text-align:center;font-size:12px;color:#222">3M</div>
<div class="t" style="left:646px;top:773.5px;width:34.5px;text-align:center;font-size:12px;color:#1560b8">6M</div>
<div class="t" style="left:681px;top:773.5px;width:30px;text-align:center;font-size:12px;color:#222">1Y</div>
<div class="t" style="left:712px;top:773.5px;width:37px;text-align:center;font-size:12px;color:#222">ALL</div>
<div class="btn" style="left:766.5px;top:768.5px;width:102px;height:23px;border-radius:3px"></div>
<div class="sep" style="left:845px;top:769px;width:1px;height:22px"></div>
<div class="t" style="left:774.5px;top:774.3px;font-size:11.5px;color:#222">CUSTOM</div>
<svg style="left:831px;top:778px" width="8" height="4.5" viewBox="0 0 8 4.5"><path d="M0 4.5H8L4 0Z" fill="#9a9a9a"/></svg>
<svg style="left:851.5px;top:775px" width="11" height="10" viewBox="0 0 11 10" fill="none" stroke="#555" stroke-width="0.9"><rect x="0.5" y="0.8" width="10" height="8.5" rx="0.5"/><path d="M2.5 3.5V2.7H3.5 M7.5 2.7H8.5V3.5 M8.5 6.5V7.3H7.5 M3.5 7.3H2.5V6.5" stroke-width="0.7"/></svg>


<!-- splitter handle -->
<div class="btn" style="left:455px;top:407px;width:16px;height:52px;border-radius:3px"></div>
<div class="sep" style="left:456px;top:443px;width:14px;height:1px"></div>
<div class="a" style="left:461px;top:414px;width:1px;height:22px;background:#8a8a8a"></div>
<div class="a" style="left:464px;top:414px;width:1px;height:22px;background:#8a8a8a"></div>
<svg style="left:459.5px;top:447.5px" width="7" height="7" viewBox="0 0 7 7" stroke="#888" stroke-width="0.9"><path d="M1 1L6 6M6 1L1 6"/></svg>


<!-- callout -->
<svg style="left:0;top:0" width="1280" height="800" viewBox="0 0 1280 800" fill="none" stroke="#7413f2" stroke-width="1.8">
<path d="M76.0 291.9 H222.6 M76.0 328.6 H222.6" stroke-dasharray="12.1 4.2" stroke-dashoffset="6.1"/>
<path d="M76.9 291.0 V329.5 M221.7 291.0 V329.5" stroke-dasharray="13.4 5.7" stroke-dashoffset="6.7"/>
</svg>
<div class="a" style="left:222px;top:311px;width:128px;height:2px;background:#7413f2"></div>
<svg style="left:220px;top:304px" width="10" height="16" viewBox="0 0 10 16"><path d="M8 1.5 L1.3 8 L8 14.5" fill="none" stroke="#7413f2" stroke-width="1.9" stroke-linecap="round" stroke-linejoin="round"/></svg>
<div class="a" style="left:349px;top:296px;width:138px;height:31.5px;border:2px solid #7413f2;border-radius:5px;background:#fff"></div>
<div class="t" style="left:349px;top:304.5px;width:138px;text-align:center;font-size:16px;font-weight:bold;color:#7413f2;transform:scaleX(0.9);transform-origin:50% 0">Save search</div>

</div>
</body></html>
